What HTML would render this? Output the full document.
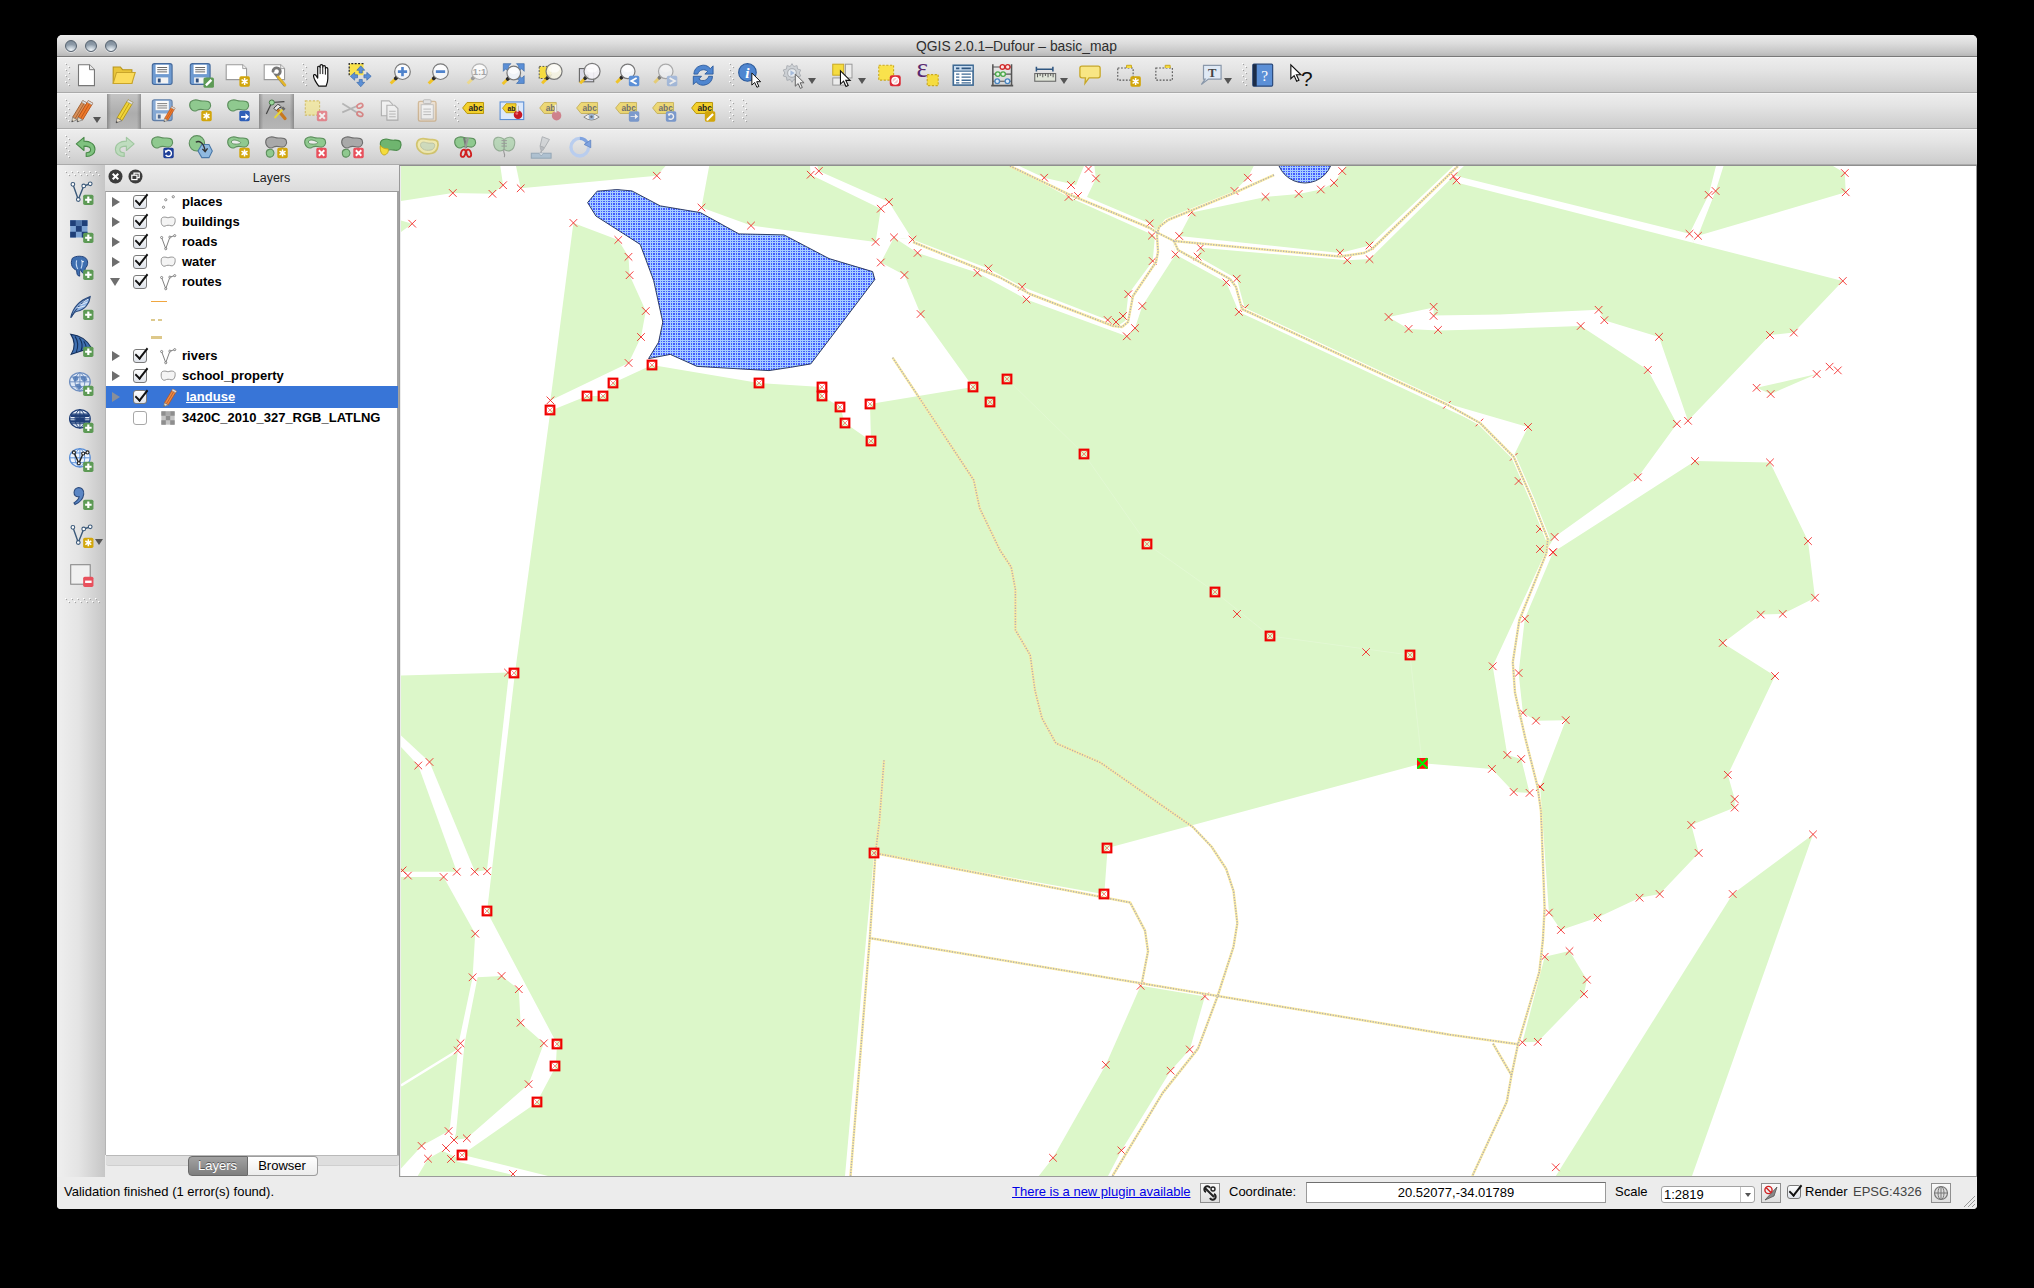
<!DOCTYPE html><html><head><meta charset="utf-8"><title>QGIS</title><style>
*{box-sizing:border-box;margin:0;padding:0}
html,body{width:2034px;height:1288px;background:#000;overflow:hidden}
body{font-family:"Liberation Sans",sans-serif;font-size:13px;color:#000;position:relative}
.abs{position:absolute}
#win{position:absolute;left:57px;top:35px;width:1920px;height:1174px;background:#ececec;border-radius:5px 5px 4px 4px;overflow:hidden}
#title{position:absolute;left:0;top:0;width:1920px;height:22px;background:linear-gradient(#ececec,#dcdcdc 40%,#c4c4c4 85%,#b6b6b6);border-bottom:1px solid #787878;border-radius:5px 5px 0 0;font-size:13.85px;line-height:22px;color:#2e2e2e}
#title span{position:absolute;left:859px;top:0;white-space:nowrap;letter-spacing:0px}
.tl{position:absolute;top:5px;width:12px;height:12px;border-radius:6px;background:radial-gradient(ellipse 70% 55% at 50% 92%,#f2f6f9 0,#c8d2da 45%,rgba(160,174,186,0) 100%),linear-gradient(#7c8a98,#aebac6);border:1px solid #55616e;box-shadow:0 1px 0 rgba(255,255,255,0.45)}
.tb{position:absolute;left:0;width:1920px;height:36px;background:linear-gradient(#ededed,#e4e4e4 35%,#d0d0d0 90%,#cbcbcb);border-top:1px solid #f4f4f4;border-bottom:1px solid #ababab}
.hv{position:absolute;width:6px;height:24px;background-image:radial-gradient(circle at 1.5px 1.5px,#a3a3a3 0.55px,rgba(163,163,163,0) 1.05px),radial-gradient(circle at 2.2px 2.2px,#ffffff 0.8px,rgba(255,255,255,0) 1.35px),radial-gradient(circle at 4.5px 4.5px,#a3a3a3 0.55px,rgba(163,163,163,0) 1.05px),radial-gradient(circle at 5.2px 5.2px,#ffffff 0.8px,rgba(255,255,255,0) 1.35px);background-size:6px 6px}
.hh{position:absolute;height:6px;width:36px;background-image:radial-gradient(circle at 1.5px 1.5px,#a3a3a3 0.55px,rgba(163,163,163,0) 1.05px),radial-gradient(circle at 2.2px 2.2px,#ffffff 0.8px,rgba(255,255,255,0) 1.35px),radial-gradient(circle at 4.5px 4.5px,#a3a3a3 0.55px,rgba(163,163,163,0) 1.05px),radial-gradient(circle at 5.2px 5.2px,#ffffff 0.8px,rgba(255,255,255,0) 1.35px);background-size:6px 6px}
.pressed{position:absolute;height:35px;background:linear-gradient(90deg,rgba(90,90,90,0.45),rgba(90,90,90,0) 12%,rgba(90,90,90,0) 88%,rgba(90,90,90,0.45)),linear-gradient(#c4c4c4,#adadad 55%,#b6b6b6)}
.ic{position:absolute;width:24px;height:24px;overflow:visible}
.dd{position:absolute;width:0;height:0;border-left:4px solid transparent;border-right:4px solid transparent;border-top:6.5px solid #555}
#ltb{position:absolute;left:0;top:130px;width:48px;height:1012px;background:linear-gradient(90deg,#efefef,#e4e4e4 45%,#c6c6c6)}
#lhead{position:absolute;left:48px;top:130px;width:294px;height:27px;background:linear-gradient(#ededed,#dcdcdc);border-bottom:1px solid #a5a5a5;text-align:center;line-height:26px;font-size:12.5px;color:#222;padding-left:39px}
#tree{position:absolute;left:48px;top:156px;width:294px;height:964px;background:#fff;border-left:1px solid #b5b5b5;border-right:2px solid #a3a3a3;border-top:1px solid #9c9c9c}
.row{position:absolute;left:0;width:290px;height:20px;font-weight:bold;font-size:13px;line-height:20px;white-space:nowrap}
.row .t{position:absolute;left:76px;top:0}
.arr{position:absolute;left:6px;top:5px;width:0;height:0;border-top:5px solid transparent;border-bottom:5px solid transparent;border-left:8px solid #6e6e6e}
.arrd{position:absolute;left:4px;top:6px;width:0;height:0;border-left:5px solid transparent;border-right:5px solid transparent;border-top:8px solid #6e6e6e}
.cb{position:absolute;left:27px;top:3px;width:14px;height:14px;border:1px solid #7a7a7a;border-radius:3px;background:linear-gradient(#fdfdfd,#dfe3ea)}
.cb.on:after{content:"";position:absolute;left:3.5px;top:-4.5px;width:5px;height:12px;border:solid #111;border-width:0 2.4px 2.4px 0;transform:rotate(38deg) skewY(8deg)}
#status{position:absolute;left:0;top:1142px;width:1920px;height:32px;background:#ececec;font-size:13px;line-height:16px}
#mapborder{position:absolute;left:342px;top:130px;width:1578px;height:1012px;border:1px solid #9a9a9a;border-top-color:#8f8f8f}
</style></head><body>
<div id="win">
<div id="title"><span>QGIS 2.0.1&#8211;Dufour &#8211; basic_map</span><div class="tl" style="left:8px"></div><div class="tl" style="left:28px"></div><div class="tl" style="left:48px"></div></div>
<div class="tb" style="top:22px"></div>
<div class="tb" style="top:58px"></div>
<div class="tb" style="top:94px"></div>
<div class="pressed" style="left:50px;top:58.5px;width:34px"></div><div class="pressed" style="left:202px;top:58.5px;width:34.5px"></div><svg class="abs" style="left:7.549999999999997px;top:28.450000000000003px;width:6px;height:25px" viewBox="0 0 6 25"><rect x="0" y="0" width="1" height="1" fill="#ffffff"/><rect x="1" y="1" width="1.1" height="1.1" fill="#a2a2a2"/><rect x="1" y="0" width="1" height="1" fill="#e9e9e9" opacity="0.6"/><rect x="0" y="1" width="1" height="1" fill="#e9e9e9" opacity="0.6"/><rect x="3" y="3" width="1" height="1" fill="#ffffff"/><rect x="4" y="4" width="1.1" height="1.1" fill="#a2a2a2"/><rect x="4" y="3" width="1" height="1" fill="#e9e9e9" opacity="0.6"/><rect x="3" y="4" width="1" height="1" fill="#e9e9e9" opacity="0.6"/><rect x="0" y="6" width="1" height="1" fill="#ffffff"/><rect x="1" y="7" width="1.1" height="1.1" fill="#a2a2a2"/><rect x="1" y="6" width="1" height="1" fill="#e9e9e9" opacity="0.6"/><rect x="0" y="7" width="1" height="1" fill="#e9e9e9" opacity="0.6"/><rect x="3" y="9" width="1" height="1" fill="#ffffff"/><rect x="4" y="10" width="1.1" height="1.1" fill="#a2a2a2"/><rect x="4" y="9" width="1" height="1" fill="#e9e9e9" opacity="0.6"/><rect x="3" y="10" width="1" height="1" fill="#e9e9e9" opacity="0.6"/><rect x="0" y="12" width="1" height="1" fill="#ffffff"/><rect x="1" y="13" width="1.1" height="1.1" fill="#a2a2a2"/><rect x="1" y="12" width="1" height="1" fill="#e9e9e9" opacity="0.6"/><rect x="0" y="13" width="1" height="1" fill="#e9e9e9" opacity="0.6"/><rect x="3" y="15" width="1" height="1" fill="#ffffff"/><rect x="4" y="16" width="1.1" height="1.1" fill="#a2a2a2"/><rect x="4" y="15" width="1" height="1" fill="#e9e9e9" opacity="0.6"/><rect x="3" y="16" width="1" height="1" fill="#e9e9e9" opacity="0.6"/><rect x="0" y="18" width="1" height="1" fill="#ffffff"/><rect x="1" y="19" width="1.1" height="1.1" fill="#a2a2a2"/><rect x="1" y="18" width="1" height="1" fill="#e9e9e9" opacity="0.6"/><rect x="0" y="19" width="1" height="1" fill="#e9e9e9" opacity="0.6"/><rect x="3" y="21" width="1" height="1" fill="#ffffff"/><rect x="4" y="22" width="1.1" height="1.1" fill="#a2a2a2"/><rect x="4" y="21" width="1" height="1" fill="#e9e9e9" opacity="0.6"/><rect x="3" y="22" width="1" height="1" fill="#e9e9e9" opacity="0.6"/></svg><svg class="abs" style="left:244.55px;top:28.450000000000003px;width:6px;height:25px" viewBox="0 0 6 25"><rect x="0" y="0" width="1" height="1" fill="#ffffff"/><rect x="1" y="1" width="1.1" height="1.1" fill="#a2a2a2"/><rect x="1" y="0" width="1" height="1" fill="#e9e9e9" opacity="0.6"/><rect x="0" y="1" width="1" height="1" fill="#e9e9e9" opacity="0.6"/><rect x="3" y="3" width="1" height="1" fill="#ffffff"/><rect x="4" y="4" width="1.1" height="1.1" fill="#a2a2a2"/><rect x="4" y="3" width="1" height="1" fill="#e9e9e9" opacity="0.6"/><rect x="3" y="4" width="1" height="1" fill="#e9e9e9" opacity="0.6"/><rect x="0" y="6" width="1" height="1" fill="#ffffff"/><rect x="1" y="7" width="1.1" height="1.1" fill="#a2a2a2"/><rect x="1" y="6" width="1" height="1" fill="#e9e9e9" opacity="0.6"/><rect x="0" y="7" width="1" height="1" fill="#e9e9e9" opacity="0.6"/><rect x="3" y="9" width="1" height="1" fill="#ffffff"/><rect x="4" y="10" width="1.1" height="1.1" fill="#a2a2a2"/><rect x="4" y="9" width="1" height="1" fill="#e9e9e9" opacity="0.6"/><rect x="3" y="10" width="1" height="1" fill="#e9e9e9" opacity="0.6"/><rect x="0" y="12" width="1" height="1" fill="#ffffff"/><rect x="1" y="13" width="1.1" height="1.1" fill="#a2a2a2"/><rect x="1" y="12" width="1" height="1" fill="#e9e9e9" opacity="0.6"/><rect x="0" y="13" width="1" height="1" fill="#e9e9e9" opacity="0.6"/><rect x="3" y="15" width="1" height="1" fill="#ffffff"/><rect x="4" y="16" width="1.1" height="1.1" fill="#a2a2a2"/><rect x="4" y="15" width="1" height="1" fill="#e9e9e9" opacity="0.6"/><rect x="3" y="16" width="1" height="1" fill="#e9e9e9" opacity="0.6"/><rect x="0" y="18" width="1" height="1" fill="#ffffff"/><rect x="1" y="19" width="1.1" height="1.1" fill="#a2a2a2"/><rect x="1" y="18" width="1" height="1" fill="#e9e9e9" opacity="0.6"/><rect x="0" y="19" width="1" height="1" fill="#e9e9e9" opacity="0.6"/><rect x="3" y="21" width="1" height="1" fill="#ffffff"/><rect x="4" y="22" width="1.1" height="1.1" fill="#a2a2a2"/><rect x="4" y="21" width="1" height="1" fill="#e9e9e9" opacity="0.6"/><rect x="3" y="22" width="1" height="1" fill="#e9e9e9" opacity="0.6"/></svg><svg class="abs" style="left:671.55px;top:28.450000000000003px;width:6px;height:25px" viewBox="0 0 6 25"><rect x="0" y="0" width="1" height="1" fill="#ffffff"/><rect x="1" y="1" width="1.1" height="1.1" fill="#a2a2a2"/><rect x="1" y="0" width="1" height="1" fill="#e9e9e9" opacity="0.6"/><rect x="0" y="1" width="1" height="1" fill="#e9e9e9" opacity="0.6"/><rect x="3" y="3" width="1" height="1" fill="#ffffff"/><rect x="4" y="4" width="1.1" height="1.1" fill="#a2a2a2"/><rect x="4" y="3" width="1" height="1" fill="#e9e9e9" opacity="0.6"/><rect x="3" y="4" width="1" height="1" fill="#e9e9e9" opacity="0.6"/><rect x="0" y="6" width="1" height="1" fill="#ffffff"/><rect x="1" y="7" width="1.1" height="1.1" fill="#a2a2a2"/><rect x="1" y="6" width="1" height="1" fill="#e9e9e9" opacity="0.6"/><rect x="0" y="7" width="1" height="1" fill="#e9e9e9" opacity="0.6"/><rect x="3" y="9" width="1" height="1" fill="#ffffff"/><rect x="4" y="10" width="1.1" height="1.1" fill="#a2a2a2"/><rect x="4" y="9" width="1" height="1" fill="#e9e9e9" opacity="0.6"/><rect x="3" y="10" width="1" height="1" fill="#e9e9e9" opacity="0.6"/><rect x="0" y="12" width="1" height="1" fill="#ffffff"/><rect x="1" y="13" width="1.1" height="1.1" fill="#a2a2a2"/><rect x="1" y="12" width="1" height="1" fill="#e9e9e9" opacity="0.6"/><rect x="0" y="13" width="1" height="1" fill="#e9e9e9" opacity="0.6"/><rect x="3" y="15" width="1" height="1" fill="#ffffff"/><rect x="4" y="16" width="1.1" height="1.1" fill="#a2a2a2"/><rect x="4" y="15" width="1" height="1" fill="#e9e9e9" opacity="0.6"/><rect x="3" y="16" width="1" height="1" fill="#e9e9e9" opacity="0.6"/><rect x="0" y="18" width="1" height="1" fill="#ffffff"/><rect x="1" y="19" width="1.1" height="1.1" fill="#a2a2a2"/><rect x="1" y="18" width="1" height="1" fill="#e9e9e9" opacity="0.6"/><rect x="0" y="19" width="1" height="1" fill="#e9e9e9" opacity="0.6"/><rect x="3" y="21" width="1" height="1" fill="#ffffff"/><rect x="4" y="22" width="1.1" height="1.1" fill="#a2a2a2"/><rect x="4" y="21" width="1" height="1" fill="#e9e9e9" opacity="0.6"/><rect x="3" y="22" width="1" height="1" fill="#e9e9e9" opacity="0.6"/></svg><svg class="abs" style="left:1184.55px;top:28.450000000000003px;width:6px;height:25px" viewBox="0 0 6 25"><rect x="0" y="0" width="1" height="1" fill="#ffffff"/><rect x="1" y="1" width="1.1" height="1.1" fill="#a2a2a2"/><rect x="1" y="0" width="1" height="1" fill="#e9e9e9" opacity="0.6"/><rect x="0" y="1" width="1" height="1" fill="#e9e9e9" opacity="0.6"/><rect x="3" y="3" width="1" height="1" fill="#ffffff"/><rect x="4" y="4" width="1.1" height="1.1" fill="#a2a2a2"/><rect x="4" y="3" width="1" height="1" fill="#e9e9e9" opacity="0.6"/><rect x="3" y="4" width="1" height="1" fill="#e9e9e9" opacity="0.6"/><rect x="0" y="6" width="1" height="1" fill="#ffffff"/><rect x="1" y="7" width="1.1" height="1.1" fill="#a2a2a2"/><rect x="1" y="6" width="1" height="1" fill="#e9e9e9" opacity="0.6"/><rect x="0" y="7" width="1" height="1" fill="#e9e9e9" opacity="0.6"/><rect x="3" y="9" width="1" height="1" fill="#ffffff"/><rect x="4" y="10" width="1.1" height="1.1" fill="#a2a2a2"/><rect x="4" y="9" width="1" height="1" fill="#e9e9e9" opacity="0.6"/><rect x="3" y="10" width="1" height="1" fill="#e9e9e9" opacity="0.6"/><rect x="0" y="12" width="1" height="1" fill="#ffffff"/><rect x="1" y="13" width="1.1" height="1.1" fill="#a2a2a2"/><rect x="1" y="12" width="1" height="1" fill="#e9e9e9" opacity="0.6"/><rect x="0" y="13" width="1" height="1" fill="#e9e9e9" opacity="0.6"/><rect x="3" y="15" width="1" height="1" fill="#ffffff"/><rect x="4" y="16" width="1.1" height="1.1" fill="#a2a2a2"/><rect x="4" y="15" width="1" height="1" fill="#e9e9e9" opacity="0.6"/><rect x="3" y="16" width="1" height="1" fill="#e9e9e9" opacity="0.6"/><rect x="0" y="18" width="1" height="1" fill="#ffffff"/><rect x="1" y="19" width="1.1" height="1.1" fill="#a2a2a2"/><rect x="1" y="18" width="1" height="1" fill="#e9e9e9" opacity="0.6"/><rect x="0" y="19" width="1" height="1" fill="#e9e9e9" opacity="0.6"/><rect x="3" y="21" width="1" height="1" fill="#ffffff"/><rect x="4" y="22" width="1.1" height="1.1" fill="#a2a2a2"/><rect x="4" y="21" width="1" height="1" fill="#e9e9e9" opacity="0.6"/><rect x="3" y="22" width="1" height="1" fill="#e9e9e9" opacity="0.6"/></svg><svg class="abs" style="left:7.549999999999997px;top:64.45px;width:6px;height:25px" viewBox="0 0 6 25"><rect x="0" y="0" width="1" height="1" fill="#ffffff"/><rect x="1" y="1" width="1.1" height="1.1" fill="#a2a2a2"/><rect x="1" y="0" width="1" height="1" fill="#e9e9e9" opacity="0.6"/><rect x="0" y="1" width="1" height="1" fill="#e9e9e9" opacity="0.6"/><rect x="3" y="3" width="1" height="1" fill="#ffffff"/><rect x="4" y="4" width="1.1" height="1.1" fill="#a2a2a2"/><rect x="4" y="3" width="1" height="1" fill="#e9e9e9" opacity="0.6"/><rect x="3" y="4" width="1" height="1" fill="#e9e9e9" opacity="0.6"/><rect x="0" y="6" width="1" height="1" fill="#ffffff"/><rect x="1" y="7" width="1.1" height="1.1" fill="#a2a2a2"/><rect x="1" y="6" width="1" height="1" fill="#e9e9e9" opacity="0.6"/><rect x="0" y="7" width="1" height="1" fill="#e9e9e9" opacity="0.6"/><rect x="3" y="9" width="1" height="1" fill="#ffffff"/><rect x="4" y="10" width="1.1" height="1.1" fill="#a2a2a2"/><rect x="4" y="9" width="1" height="1" fill="#e9e9e9" opacity="0.6"/><rect x="3" y="10" width="1" height="1" fill="#e9e9e9" opacity="0.6"/><rect x="0" y="12" width="1" height="1" fill="#ffffff"/><rect x="1" y="13" width="1.1" height="1.1" fill="#a2a2a2"/><rect x="1" y="12" width="1" height="1" fill="#e9e9e9" opacity="0.6"/><rect x="0" y="13" width="1" height="1" fill="#e9e9e9" opacity="0.6"/><rect x="3" y="15" width="1" height="1" fill="#ffffff"/><rect x="4" y="16" width="1.1" height="1.1" fill="#a2a2a2"/><rect x="4" y="15" width="1" height="1" fill="#e9e9e9" opacity="0.6"/><rect x="3" y="16" width="1" height="1" fill="#e9e9e9" opacity="0.6"/><rect x="0" y="18" width="1" height="1" fill="#ffffff"/><rect x="1" y="19" width="1.1" height="1.1" fill="#a2a2a2"/><rect x="1" y="18" width="1" height="1" fill="#e9e9e9" opacity="0.6"/><rect x="0" y="19" width="1" height="1" fill="#e9e9e9" opacity="0.6"/><rect x="3" y="21" width="1" height="1" fill="#ffffff"/><rect x="4" y="22" width="1.1" height="1.1" fill="#a2a2a2"/><rect x="4" y="21" width="1" height="1" fill="#e9e9e9" opacity="0.6"/><rect x="3" y="22" width="1" height="1" fill="#e9e9e9" opacity="0.6"/></svg><svg class="abs" style="left:396.55px;top:64.45px;width:6px;height:25px" viewBox="0 0 6 25"><rect x="0" y="0" width="1" height="1" fill="#ffffff"/><rect x="1" y="1" width="1.1" height="1.1" fill="#a2a2a2"/><rect x="1" y="0" width="1" height="1" fill="#e9e9e9" opacity="0.6"/><rect x="0" y="1" width="1" height="1" fill="#e9e9e9" opacity="0.6"/><rect x="3" y="3" width="1" height="1" fill="#ffffff"/><rect x="4" y="4" width="1.1" height="1.1" fill="#a2a2a2"/><rect x="4" y="3" width="1" height="1" fill="#e9e9e9" opacity="0.6"/><rect x="3" y="4" width="1" height="1" fill="#e9e9e9" opacity="0.6"/><rect x="0" y="6" width="1" height="1" fill="#ffffff"/><rect x="1" y="7" width="1.1" height="1.1" fill="#a2a2a2"/><rect x="1" y="6" width="1" height="1" fill="#e9e9e9" opacity="0.6"/><rect x="0" y="7" width="1" height="1" fill="#e9e9e9" opacity="0.6"/><rect x="3" y="9" width="1" height="1" fill="#ffffff"/><rect x="4" y="10" width="1.1" height="1.1" fill="#a2a2a2"/><rect x="4" y="9" width="1" height="1" fill="#e9e9e9" opacity="0.6"/><rect x="3" y="10" width="1" height="1" fill="#e9e9e9" opacity="0.6"/><rect x="0" y="12" width="1" height="1" fill="#ffffff"/><rect x="1" y="13" width="1.1" height="1.1" fill="#a2a2a2"/><rect x="1" y="12" width="1" height="1" fill="#e9e9e9" opacity="0.6"/><rect x="0" y="13" width="1" height="1" fill="#e9e9e9" opacity="0.6"/><rect x="3" y="15" width="1" height="1" fill="#ffffff"/><rect x="4" y="16" width="1.1" height="1.1" fill="#a2a2a2"/><rect x="4" y="15" width="1" height="1" fill="#e9e9e9" opacity="0.6"/><rect x="3" y="16" width="1" height="1" fill="#e9e9e9" opacity="0.6"/><rect x="0" y="18" width="1" height="1" fill="#ffffff"/><rect x="1" y="19" width="1.1" height="1.1" fill="#a2a2a2"/><rect x="1" y="18" width="1" height="1" fill="#e9e9e9" opacity="0.6"/><rect x="0" y="19" width="1" height="1" fill="#e9e9e9" opacity="0.6"/><rect x="3" y="21" width="1" height="1" fill="#ffffff"/><rect x="4" y="22" width="1.1" height="1.1" fill="#a2a2a2"/><rect x="4" y="21" width="1" height="1" fill="#e9e9e9" opacity="0.6"/><rect x="3" y="22" width="1" height="1" fill="#e9e9e9" opacity="0.6"/></svg><svg class="abs" style="left:671.55px;top:64.45px;width:6px;height:25px" viewBox="0 0 6 25"><rect x="0" y="0" width="1" height="1" fill="#ffffff"/><rect x="1" y="1" width="1.1" height="1.1" fill="#a2a2a2"/><rect x="1" y="0" width="1" height="1" fill="#e9e9e9" opacity="0.6"/><rect x="0" y="1" width="1" height="1" fill="#e9e9e9" opacity="0.6"/><rect x="3" y="3" width="1" height="1" fill="#ffffff"/><rect x="4" y="4" width="1.1" height="1.1" fill="#a2a2a2"/><rect x="4" y="3" width="1" height="1" fill="#e9e9e9" opacity="0.6"/><rect x="3" y="4" width="1" height="1" fill="#e9e9e9" opacity="0.6"/><rect x="0" y="6" width="1" height="1" fill="#ffffff"/><rect x="1" y="7" width="1.1" height="1.1" fill="#a2a2a2"/><rect x="1" y="6" width="1" height="1" fill="#e9e9e9" opacity="0.6"/><rect x="0" y="7" width="1" height="1" fill="#e9e9e9" opacity="0.6"/><rect x="3" y="9" width="1" height="1" fill="#ffffff"/><rect x="4" y="10" width="1.1" height="1.1" fill="#a2a2a2"/><rect x="4" y="9" width="1" height="1" fill="#e9e9e9" opacity="0.6"/><rect x="3" y="10" width="1" height="1" fill="#e9e9e9" opacity="0.6"/><rect x="0" y="12" width="1" height="1" fill="#ffffff"/><rect x="1" y="13" width="1.1" height="1.1" fill="#a2a2a2"/><rect x="1" y="12" width="1" height="1" fill="#e9e9e9" opacity="0.6"/><rect x="0" y="13" width="1" height="1" fill="#e9e9e9" opacity="0.6"/><rect x="3" y="15" width="1" height="1" fill="#ffffff"/><rect x="4" y="16" width="1.1" height="1.1" fill="#a2a2a2"/><rect x="4" y="15" width="1" height="1" fill="#e9e9e9" opacity="0.6"/><rect x="3" y="16" width="1" height="1" fill="#e9e9e9" opacity="0.6"/><rect x="0" y="18" width="1" height="1" fill="#ffffff"/><rect x="1" y="19" width="1.1" height="1.1" fill="#a2a2a2"/><rect x="1" y="18" width="1" height="1" fill="#e9e9e9" opacity="0.6"/><rect x="0" y="19" width="1" height="1" fill="#e9e9e9" opacity="0.6"/><rect x="3" y="21" width="1" height="1" fill="#ffffff"/><rect x="4" y="22" width="1.1" height="1.1" fill="#a2a2a2"/><rect x="4" y="21" width="1" height="1" fill="#e9e9e9" opacity="0.6"/><rect x="3" y="22" width="1" height="1" fill="#e9e9e9" opacity="0.6"/></svg><svg class="abs" style="left:684.55px;top:64.45px;width:6px;height:25px" viewBox="0 0 6 25"><rect x="0" y="0" width="1" height="1" fill="#ffffff"/><rect x="1" y="1" width="1.1" height="1.1" fill="#a2a2a2"/><rect x="1" y="0" width="1" height="1" fill="#e9e9e9" opacity="0.6"/><rect x="0" y="1" width="1" height="1" fill="#e9e9e9" opacity="0.6"/><rect x="3" y="3" width="1" height="1" fill="#ffffff"/><rect x="4" y="4" width="1.1" height="1.1" fill="#a2a2a2"/><rect x="4" y="3" width="1" height="1" fill="#e9e9e9" opacity="0.6"/><rect x="3" y="4" width="1" height="1" fill="#e9e9e9" opacity="0.6"/><rect x="0" y="6" width="1" height="1" fill="#ffffff"/><rect x="1" y="7" width="1.1" height="1.1" fill="#a2a2a2"/><rect x="1" y="6" width="1" height="1" fill="#e9e9e9" opacity="0.6"/><rect x="0" y="7" width="1" height="1" fill="#e9e9e9" opacity="0.6"/><rect x="3" y="9" width="1" height="1" fill="#ffffff"/><rect x="4" y="10" width="1.1" height="1.1" fill="#a2a2a2"/><rect x="4" y="9" width="1" height="1" fill="#e9e9e9" opacity="0.6"/><rect x="3" y="10" width="1" height="1" fill="#e9e9e9" opacity="0.6"/><rect x="0" y="12" width="1" height="1" fill="#ffffff"/><rect x="1" y="13" width="1.1" height="1.1" fill="#a2a2a2"/><rect x="1" y="12" width="1" height="1" fill="#e9e9e9" opacity="0.6"/><rect x="0" y="13" width="1" height="1" fill="#e9e9e9" opacity="0.6"/><rect x="3" y="15" width="1" height="1" fill="#ffffff"/><rect x="4" y="16" width="1.1" height="1.1" fill="#a2a2a2"/><rect x="4" y="15" width="1" height="1" fill="#e9e9e9" opacity="0.6"/><rect x="3" y="16" width="1" height="1" fill="#e9e9e9" opacity="0.6"/><rect x="0" y="18" width="1" height="1" fill="#ffffff"/><rect x="1" y="19" width="1.1" height="1.1" fill="#a2a2a2"/><rect x="1" y="18" width="1" height="1" fill="#e9e9e9" opacity="0.6"/><rect x="0" y="19" width="1" height="1" fill="#e9e9e9" opacity="0.6"/><rect x="3" y="21" width="1" height="1" fill="#ffffff"/><rect x="4" y="22" width="1.1" height="1.1" fill="#a2a2a2"/><rect x="4" y="21" width="1" height="1" fill="#e9e9e9" opacity="0.6"/><rect x="3" y="22" width="1" height="1" fill="#e9e9e9" opacity="0.6"/></svg><svg class="abs" style="left:7.549999999999997px;top:100.44999999999999px;width:6px;height:25px" viewBox="0 0 6 25"><rect x="0" y="0" width="1" height="1" fill="#ffffff"/><rect x="1" y="1" width="1.1" height="1.1" fill="#a2a2a2"/><rect x="1" y="0" width="1" height="1" fill="#e9e9e9" opacity="0.6"/><rect x="0" y="1" width="1" height="1" fill="#e9e9e9" opacity="0.6"/><rect x="3" y="3" width="1" height="1" fill="#ffffff"/><rect x="4" y="4" width="1.1" height="1.1" fill="#a2a2a2"/><rect x="4" y="3" width="1" height="1" fill="#e9e9e9" opacity="0.6"/><rect x="3" y="4" width="1" height="1" fill="#e9e9e9" opacity="0.6"/><rect x="0" y="6" width="1" height="1" fill="#ffffff"/><rect x="1" y="7" width="1.1" height="1.1" fill="#a2a2a2"/><rect x="1" y="6" width="1" height="1" fill="#e9e9e9" opacity="0.6"/><rect x="0" y="7" width="1" height="1" fill="#e9e9e9" opacity="0.6"/><rect x="3" y="9" width="1" height="1" fill="#ffffff"/><rect x="4" y="10" width="1.1" height="1.1" fill="#a2a2a2"/><rect x="4" y="9" width="1" height="1" fill="#e9e9e9" opacity="0.6"/><rect x="3" y="10" width="1" height="1" fill="#e9e9e9" opacity="0.6"/><rect x="0" y="12" width="1" height="1" fill="#ffffff"/><rect x="1" y="13" width="1.1" height="1.1" fill="#a2a2a2"/><rect x="1" y="12" width="1" height="1" fill="#e9e9e9" opacity="0.6"/><rect x="0" y="13" width="1" height="1" fill="#e9e9e9" opacity="0.6"/><rect x="3" y="15" width="1" height="1" fill="#ffffff"/><rect x="4" y="16" width="1.1" height="1.1" fill="#a2a2a2"/><rect x="4" y="15" width="1" height="1" fill="#e9e9e9" opacity="0.6"/><rect x="3" y="16" width="1" height="1" fill="#e9e9e9" opacity="0.6"/><rect x="0" y="18" width="1" height="1" fill="#ffffff"/><rect x="1" y="19" width="1.1" height="1.1" fill="#a2a2a2"/><rect x="1" y="18" width="1" height="1" fill="#e9e9e9" opacity="0.6"/><rect x="0" y="19" width="1" height="1" fill="#e9e9e9" opacity="0.6"/><rect x="3" y="21" width="1" height="1" fill="#ffffff"/><rect x="4" y="22" width="1.1" height="1.1" fill="#a2a2a2"/><rect x="4" y="21" width="1" height="1" fill="#e9e9e9" opacity="0.6"/><rect x="3" y="22" width="1" height="1" fill="#e9e9e9" opacity="0.6"/></svg><svg class="ic" style="left:15.8px;top:26.8px;width:26.4px;height:26.4px" viewBox="0 0 24 24"><path d="M5,2.5H15L19.5,7V21.5H5Z" fill="#fff" stroke="#777" stroke-width="1"/><path d="M15,2.5V7H19.5" fill="#e8e8e8" stroke="#777" stroke-width="0.9"/></svg><svg class="ic" style="left:53.8px;top:26.8px;width:26.4px;height:26.4px" viewBox="0 0 24 24"><g transform="translate(-0.5,-1)"><path d="M2.5,5.5H9L11,8H19.5V20H2.5Z" fill="#e9c53a" stroke="#b9951a" stroke-width="1"/><path d="M5.5,10.5H22.5L19.5,20.5H2.5Z" fill="#fbdc5c" stroke="#c9a52a" stroke-width="1"/></g></svg><svg class="ic" style="left:91.8px;top:26.8px;width:26.4px;height:26.4px" viewBox="0 0 24 24"><g transform="translate(0,-1)"><rect x="3" y="2.5" width="18" height="19" rx="2" fill="#6f9bd1" stroke="#44699c" stroke-width="1"/><rect x="6" y="3.5" width="12" height="8.5" fill="#fff"/><path d="M7.5,6h9M7.5,8h9M7.5,10h9" stroke="#666" stroke-width="0.9"/><rect x="6.5" y="15" width="11" height="5.5" fill="#f3f3f3"/><rect x="8" y="16" width="2.6" height="3.6" fill="#2f4f7f"/></g></svg><svg class="ic" style="left:129.8px;top:26.8px;width:26.4px;height:26.4px" viewBox="0 0 24 24"><g transform="translate(0,-1)"><rect x="3" y="2.5" width="18" height="19" rx="2" fill="#6f9bd1" stroke="#44699c" stroke-width="1"/><rect x="6" y="3.5" width="12" height="8.5" fill="#fff"/><path d="M7.5,6h9M7.5,8h9M7.5,10h9" stroke="#666" stroke-width="0.9"/><rect x="6.5" y="15" width="11" height="5.5" fill="#f3f3f3"/><rect x="8" y="16" width="2.6" height="3.6" fill="#2f4f7f"/></g><rect x="15" y="14" width="9.5" height="9.5" rx="1.5" fill="#5d9a55"/><path d="M17.2,21.3l5,-5" stroke="#fff" stroke-width="2.2"/></svg><svg class="ic" style="left:167.3px;top:26.8px;width:26.4px;height:26.4px" viewBox="0 0 24 24"><path d="M2,2.5H17L20.5,6V16H2Z" fill="#fff" stroke="#9a9a9a" stroke-width="1"/><path d="M17,2.5V6H20.5" fill="#eee" stroke="#9a9a9a" stroke-width="0.8"/><rect x="14" y="13" width="9.5" height="9.5" rx="1.5" fill="#d2a60c"/><g transform="translate(0,0)"><path d="M18.75,14.5v6.5M16,16.1l5.5,3.3M21.5,16.1l-5.5,3.3" stroke="#fff" stroke-width="1.4"/></g></svg><svg class="ic" style="left:204.8px;top:26.8px;width:26.4px;height:26.4px" viewBox="0 0 24 24"><path d="M2,2.5H17L20.5,6V16H2Z" fill="#fff" stroke="#9a9a9a" stroke-width="1"/><path d="M17,2.5V6H20.5" fill="#eee" stroke="#9a9a9a" stroke-width="0.8"/><path d="M10,8.5a3.3,3.3 0 1 1 3,3.4L20.5,21" stroke="#777" stroke-width="2.6" fill="none" stroke-linecap="round"/><path d="M14.5,13.5L21,21" stroke="#e2b52a" stroke-width="2.2" stroke-linecap="round"/></svg><svg class="ic" style="left:253.3px;top:26.8px;width:26.4px;height:26.4px" viewBox="0 0 24 24"><path d="M8,22C5,18 3.5,15 3.2,12.8C3,11.4 4.6,11 5.4,12.2L7,14.6V5C7,3.5 9.2,3.5 9.2,5V3.5C9.2,2 11.6,2 11.6,3.5V4.5C11.6,3 14,3 14,4.6V6C14,4.8 16.2,4.8 16.2,6.4V15C16.2,18 15.5,20 14.6,22Z" fill="#fff" stroke="#111" stroke-width="1.1" stroke-linejoin="round"/><path d="M9.2,5v6M11.6,4.5v6.5M14,6v5.5" stroke="#111" stroke-width="0.9"/></svg><svg class="ic" style="left:289.8px;top:26.8px;width:26.4px;height:26.4px" viewBox="0 0 24 24"><rect x="2" y="1.5" width="13" height="10.5" fill="#f9e24c"/><path d="M2,12V1.5H15" fill="none" stroke="#222" stroke-width="1.1" stroke-dasharray="1.8 1.3"/><path d="M12.5,3.5l3.6,4h-2.2v2.6h-2.8V7.5H8.9ZM12.5,22.5l-3.6,-4h2.2v-2.6h2.8v2.6h2.2ZM3,13l4,-3.6v2.2h2.6v2.8H7v2.2ZM22,13l-4,3.6v-2.2h-2.6v-2.8H18V9.4Z" fill="#5b8fd6" stroke="#3a6aa8" stroke-width="0.6"/></svg><svg class="ic" style="left:328.8px;top:26.8px;width:26.4px;height:26.4px" viewBox="0 0 24 24"><path d="M10.088000000000001,13.712L4.288000000000002,19.512" stroke="#f0c428" stroke-width="2.7" stroke-linecap="butt"/><path d="M5.488000000000001,16.512L6.6880000000000015,19.112" stroke="#2a2a2a" stroke-width="0" /><path d="M10.788000000000002,13.011999999999999L8.788000000000002,15.011999999999999" stroke="#2a2a2a" stroke-width="3.2" stroke-linecap="round"/><circle cx="15" cy="8.8" r="7.1" fill="#f3f5f8" stroke="#7a7a7a" stroke-width="1.1"/><ellipse cx="15" cy="6.315000000000001" rx="5.111999999999999" ry="3.55" fill="#fff" opacity="0.7"/><path d="M15,4.6v8.4M10.8,8.8h8.4" stroke="#4f83cc" stroke-width="2.4"/></svg><svg class="ic" style="left:366.8px;top:26.8px;width:26.4px;height:26.4px" viewBox="0 0 24 24"><path d="M10.088000000000001,13.712L4.288000000000002,19.512" stroke="#f0c428" stroke-width="2.7" stroke-linecap="butt"/><path d="M5.488000000000001,16.512L6.6880000000000015,19.112" stroke="#2a2a2a" stroke-width="0" /><path d="M10.788000000000002,13.011999999999999L8.788000000000002,15.011999999999999" stroke="#2a2a2a" stroke-width="3.2" stroke-linecap="round"/><circle cx="15" cy="8.8" r="7.1" fill="#f3f5f8" stroke="#7a7a7a" stroke-width="1.1"/><ellipse cx="15" cy="6.315000000000001" rx="5.111999999999999" ry="3.55" fill="#fff" opacity="0.7"/><path d="M10.8,8.8h8.4" stroke="#4f83cc" stroke-width="2.4"/></svg><svg class="ic" style="left:405.8px;top:26.8px;width:26.4px;height:26.4px" viewBox="0 0 24 24"><path d="M10.088000000000001,13.712L4.288000000000002,19.512" stroke="#ecd98c" stroke-width="2.7" stroke-linecap="butt"/><path d="M5.488000000000001,16.512L6.6880000000000015,19.112" stroke="#9a9a9a" stroke-width="0" /><path d="M10.788000000000002,13.011999999999999L8.788000000000002,15.011999999999999" stroke="#9a9a9a" stroke-width="3.2" stroke-linecap="round"/><circle cx="15" cy="8.8" r="7.1" fill="#f2f2f2" stroke="#b4b4b4" stroke-width="1.1"/><ellipse cx="15" cy="6.315000000000001" rx="5.111999999999999" ry="3.55" fill="#fff" opacity="0.7"/><text x="15" y="12" font-family="Liberation Sans" font-weight="bold" font-size="8.6" text-anchor="middle" fill="#a4a4a4">1:1</text></svg><svg class="ic" style="left:442.8px;top:26.8px;width:26.4px;height:26.4px" viewBox="0 0 24 24"><path d="M3,1.5h7l-2.4,2.4l3.4,3.4l-2.4,2.4L5.2,6.3L3,8.5ZM22,1.5v7l-2.4,-2.4l-3.4,3.4l-2.4,-2.4L17.2,3.9l-2.2,-2.4ZM22,19.5h-7l2.4,-2.4l-3.4,-3.4l2.4,-2.4L19.8,14.7l2.2,-2.2Z" fill="#5b8fd6" stroke="#3a6aa8" stroke-width="0.6"/><path d="M8.236,14.264L2.4360000000000017,20.064" stroke="#f0c428" stroke-width="2.7" stroke-linecap="butt"/><path d="M3.636000000000001,17.064L4.836000000000001,19.663999999999998" stroke="#2a2a2a" stroke-width="0" /><path d="M8.936000000000002,13.563999999999998L6.936000000000002,15.563999999999998" stroke="#2a2a2a" stroke-width="3.2" stroke-linecap="round"/><circle cx="12.5" cy="10" r="6.2" fill="#eef2f7" stroke="#7a7a7a" stroke-width="1.1"/><ellipse cx="12.5" cy="7.83" rx="4.4639999999999995" ry="3.1" fill="#fff" opacity="0.7"/></svg><svg class="ic" style="left:480.3px;top:26.8px;width:26.4px;height:26.4px" viewBox="0 0 24 24"><rect x="2" y="4" width="11" height="11" fill="#f5dc40" stroke="#555" stroke-width="0.9" stroke-dasharray="1.6 1.4"/><path d="M10.443999999999999,13.556000000000001L4.644,19.356" stroke="#f0c428" stroke-width="2.7" stroke-linecap="butt"/><path d="M5.843999999999999,16.356L7.044,18.956" stroke="#2a2a2a" stroke-width="0" /><path d="M11.144,12.856L9.144,14.856" stroke="#2a2a2a" stroke-width="3.2" stroke-linecap="round"/><circle cx="15.5" cy="8.5" r="7.3" fill="rgba(246,244,226,0.88)" stroke="#7a7a7a" stroke-width="1.1"/><ellipse cx="15.5" cy="5.945" rx="5.255999999999999" ry="3.65" fill="#fff" opacity="0.7"/></svg><svg class="ic" style="left:518.3px;top:26.8px;width:26.4px;height:26.4px" viewBox="0 0 24 24"><rect x="4" y="6" width="13" height="12" fill="#d9d9e6" stroke="#666" stroke-width="1"/><path d="M10.443999999999999,13.556000000000001L4.644,19.356" stroke="#f0c428" stroke-width="2.7" stroke-linecap="butt"/><path d="M5.843999999999999,16.356L7.044,18.956" stroke="#2a2a2a" stroke-width="0" /><path d="M11.144,12.856L9.144,14.856" stroke="#2a2a2a" stroke-width="3.2" stroke-linecap="round"/><circle cx="15.5" cy="8.5" r="7.3" fill="rgba(244,242,246,0.9)" stroke="#7a7a7a" stroke-width="1.1"/><ellipse cx="15.5" cy="5.945" rx="5.255999999999999" ry="3.65" fill="#fff" opacity="0.7"/></svg><svg class="ic" style="left:556.8px;top:26.8px;width:26.4px;height:26.4px" viewBox="0 0 24 24"><path d="M7.948,13.052L2.1480000000000006,18.851999999999997" stroke="#f0c428" stroke-width="2.7" stroke-linecap="butt"/><path d="M3.348,15.851999999999999L4.548,18.451999999999998" stroke="#2a2a2a" stroke-width="0" /><path d="M8.648,12.351999999999999L6.648,14.351999999999999" stroke="#2a2a2a" stroke-width="3.2" stroke-linecap="round"/><circle cx="12.5" cy="8.5" r="6.6" fill="#f3f5f8" stroke="#7a7a7a" stroke-width="1.1"/><ellipse cx="12.5" cy="6.19" rx="4.752" ry="3.3" fill="#fff" opacity="0.7"/><rect x="13.5" y="12.5" width="9.5" height="9.5" rx="1.5" fill="#5b8fd6"/><path d="M20.6,14.6l-4.8,2.7l4.8,2.7" fill="none" stroke="#fff" stroke-width="1.7"/></svg><svg class="ic" style="left:595.3px;top:26.8px;width:26.4px;height:26.4px" viewBox="0 0 24 24"><g opacity="0.55"><path d="M7.948,13.052L2.1480000000000006,18.851999999999997" stroke="#f0c428" stroke-width="2.7" stroke-linecap="butt"/><path d="M3.348,15.851999999999999L4.548,18.451999999999998" stroke="#2a2a2a" stroke-width="0" /><path d="M8.648,12.351999999999999L6.648,14.351999999999999" stroke="#2a2a2a" stroke-width="3.2" stroke-linecap="round"/><circle cx="12.5" cy="8.5" r="6.6" fill="#f3f5f8" stroke="#7a7a7a" stroke-width="1.1"/><ellipse cx="12.5" cy="6.19" rx="4.752" ry="3.3" fill="#fff" opacity="0.7"/><rect x="13.5" y="12.5" width="9.5" height="9.5" rx="1.5" fill="#7a9fd8"/><path d="M16,14.6l4.8,2.7l-4.8,2.7" fill="none" stroke="#fff" stroke-width="1.7"/></g></svg><svg class="ic" style="left:632.8px;top:26.8px;width:26.4px;height:26.4px" viewBox="0 0 24 24"><path d="M3.5,11A8.5,8.5 0 0 1 18.5,6L21,3.5V11H13.5L16,8.5A5.5,5.5 0 0 0 7,11Z" fill="#4f86d0" stroke="#2b5a9c" stroke-width="0.8"/><path d="M20.5,13A8.5,8.5 0 0 1 5.5,18L3,20.5V13H10.5L8,15.5A5.5,5.5 0 0 0 17,13Z" fill="#4f86d0" stroke="#2b5a9c" stroke-width="0.8"/></svg><svg class="ic" style="left:679.8px;top:26.8px;width:26.4px;height:26.4px" viewBox="0 0 24 24"><circle cx="9.5" cy="9.5" r="8" fill="#4f86d0" stroke="#2b5a9c"/><text x="9.5" y="14.3" font-family="Liberation Serif" font-style="italic" font-weight="bold" font-size="14" text-anchor="middle" fill="#fff">i</text><g transform="translate(13.5,10)"><path d="M0,0L0,11L2.6,8.6L4.6,13L6.4,12.2L4.4,7.9L8,7.9Z" fill="#fff" stroke="#111" stroke-width="0.9"/></g></svg><svg class="ic" style="left:723.8px;top:26.8px;width:26.4px;height:26.4px" viewBox="0 0 24 24"><g opacity="0.6"><path d="M10,1.5l1.6,2.6l3,-0.8l0.4,3.1l3,0.9l-1.5,2.7l1.5,2.7l-3,0.9l-0.4,3.1l-3,-0.8L10,18.5l-1.6,-2.6l-3,0.8l-0.4,-3.1l-3,-0.9l1.5,-2.7L2,7.3l3,-0.9l0.4,-3.1l3,0.8Z" fill="#bfc5cc" stroke="#8a9098" stroke-width="0.9"/><circle cx="10" cy="10" r="4" fill="#e9f0f8" stroke="#8a9098"/><path d="M8.6,7.6v4.8l3.8,-2.4Z" fill="#7fa3d8"/><g transform="translate(13,11)"><path d="M0,0L0,11L2.6,8.6L4.6,13L6.4,12.2L4.4,7.9L8,7.9Z" fill="#fff" stroke="#111" stroke-width="0.9"/></g></g></svg><svg class="ic" style="left:772.8px;top:26.8px;width:26.4px;height:26.4px" viewBox="0 0 24 24"><rect x="2.5" y="2" width="10" height="10" fill="#f5dc40" stroke="#c9a820" stroke-width="0.9"/><rect x="14" y="2" width="6" height="12.5" fill="#ececec" stroke="#999" stroke-width="0.9"/><rect x="2.5" y="14.5" width="11" height="6.5" fill="#ececec" stroke="#999" stroke-width="0.9"/><g transform="translate(9.5,8) scale(1.1)"><path d="M0,0L0,11L2.6,8.6L4.6,13L6.4,12.2L4.4,7.9L8,7.9Z" fill="#fff" stroke="#111" stroke-width="0.9"/></g></svg><svg class="ic" style="left:818.8px;top:26.8px;width:26.4px;height:26.4px" viewBox="0 0 24 24"><rect x="2.5" y="3" width="13.5" height="13.5" fill="#f9e24c" stroke="#c9a820" stroke-width="1" stroke-dasharray="2 1.4"/><rect x="12.5" y="12" width="10" height="10" rx="2" fill="#dc2a36"/><circle cx="17.5" cy="17" r="3" fill="#f4c8cc" stroke="#fff" stroke-width="1.2"/><path d="M15.4,19.1l4.2,-4.2" stroke="#fff" stroke-width="1.3"/></svg><svg class="ic" style="left:856.8px;top:26.8px;width:26.4px;height:26.4px" viewBox="0 0 24 24"><text x="7.5" y="14" font-family="Liberation Serif" font-size="25" text-anchor="middle" fill="#5a2a70">&#949;</text><rect x="12" y="11.5" width="10" height="10" fill="#f5dc40" stroke="#c9a820" stroke-width="1" stroke-dasharray="2 1.4"/></svg><svg class="ic" style="left:893.3px;top:26.8px;width:26.4px;height:26.4px" viewBox="0 0 24 24"><rect x="3" y="3" width="18" height="18" fill="#fff" stroke="#3f6a94" stroke-width="1.5"/><rect x="3.7" y="3.7" width="16.6" height="4" fill="#c8dcf0"/><path d="M5.5,5.7h3M10.5,5.7h8.5" stroke="#2f5680" stroke-width="1.6"/><path d="M3,8.3h18" stroke="#3f6a94" stroke-width="1"/><path d="M5.5,11h3M10.5,11h8.5M5.5,13.8h3M10.5,13.8h8.5M5.5,16.6h3M10.5,16.6h8.5M5.5,19h3M10.5,19h8.5" stroke="#3f6a94" stroke-width="1.2"/></svg><svg class="ic" style="left:931.8px;top:26.8px;width:26.4px;height:26.4px" viewBox="0 0 24 24"><path d="M3.5,2V21M20.5,2V21M2,21.5H22" fill="none" stroke="#555" stroke-width="1.4"/><path d="M3.5,4.5h17M3.5,11h17M3.5,17.5h17" stroke="#555" stroke-width="1"/><circle cx="12.2" cy="4.5" r="2.1" fill="#fbe4e4" stroke="#d02a2a" stroke-width="1.2"/><circle cx="17" cy="4.5" r="2.1" fill="#fbe4e4" stroke="#d02a2a" stroke-width="1.2"/><circle cx="8" cy="11" r="2.1" fill="#e2f4e0" stroke="#4aa84a" stroke-width="1.2"/><circle cx="12.8" cy="11" r="2.1" fill="#e2f4e0" stroke="#4aa84a" stroke-width="1.2"/><circle cx="7.5" cy="17.5" r="2.1" fill="#deeaf8" stroke="#4a86c0" stroke-width="1.2"/><circle cx="16.8" cy="17.5" r="2.1" fill="#deeaf8" stroke="#4a86c0" stroke-width="1.2"/></svg><svg class="ic" style="left:974.8px;top:26.8px;width:26.4px;height:26.4px" viewBox="0 0 24 24"><path d="M4,6.5h15M4,4.3v4.4M19,4.3v4.4" stroke="#2f5680" stroke-width="1.4" fill="none"/><rect x="2.5" y="10.5" width="19" height="7" fill="#dfe4d8" stroke="#6a6a6a" stroke-width="1"/><path d="M5,10.5v3.4M7.4,10.5v2.2M9.8,10.5v3.4M12.2,10.5v2.2M14.6,10.5v3.4M17,10.5v2.2M19.2,10.5v3.4" stroke="#555" stroke-width="0.9"/></svg><svg class="ic" style="left:1019.8px;top:26.8px;width:26.4px;height:26.4px" viewBox="0 0 24 24"><path d="M4,3.5H20Q22,3.5 22,5.5V13Q22,15 20,15H11L7,20.5L7.5,15H4Q2,15 2,13V5.5Q2,3.5 4,3.5Z" fill="#f8e684" stroke="#c8a828" stroke-width="1.3" transform="translate(0.8,0.6) scale(0.92)"/></svg><svg class="ic" style="left:1057.8px;top:26.8px;width:26.4px;height:26.4px" viewBox="0 0 24 24"><rect x="2.5" y="5.5" width="14" height="11" fill="none" stroke="#555" stroke-width="1" stroke-dasharray="1.6 1.4"/><path d="M10.5,5.5v-2.5h4.5v2.5" fill="#f5dc40" stroke="#c9a820" stroke-width="0.9"/><rect x="14" y="13" width="9.5" height="9.5" rx="1.5" fill="#d2a60c"/><g transform="translate(0,0)"><path d="M18.75,14.5v6.5M16,16.1l5.5,3.3M21.5,16.1l-5.5,3.3" stroke="#fff" stroke-width="1.4"/></g></svg><svg class="ic" style="left:1094.8px;top:26.8px;width:26.4px;height:26.4px" viewBox="0 0 24 24"><rect x="3.5" y="5.5" width="15" height="11" fill="none" stroke="#555" stroke-width="1" stroke-dasharray="1.6 1.4"/><path d="M12,5.5v-2.5h4.5v2.5" fill="#f5dc40" stroke="#c9a820" stroke-width="0.9"/></svg><svg class="ic" style="left:1140.8px;top:26.8px;width:26.4px;height:26.4px" viewBox="0 0 24 24"><path d="M5,3H21V15.5H9.5L3,20.5L6.5,15.5H5Z" fill="#dfe9f5" stroke="#8a98aa" stroke-width="1.1"/><text x="13" y="13.2" font-family="Liberation Serif" font-weight="bold" font-size="11.5" text-anchor="middle" fill="#444">T</text></svg><svg class="ic" style="left:1192.3px;top:26.8px;width:26.4px;height:26.4px" viewBox="0 0 24 24"><rect x="3.5" y="2" width="18" height="20" rx="1" fill="#5b8fd6" stroke="#2b4a7c" stroke-width="1.1"/><rect x="3.5" y="2" width="3.5" height="20" fill="#1c2c48"/><text x="14.2" y="17" font-family="Liberation Serif" font-size="14" text-anchor="middle" fill="#fff">?</text></svg><svg class="ic" style="left:1229.8px;top:26.8px;width:26.4px;height:26.4px" viewBox="0 0 24 24"><g transform="translate(3.5,2.5) scale(1.15)"><path d="M0,0L0,11L2.6,8.6L4.6,13L6.4,12.2L4.4,7.9L8,7.9Z" fill="#fff" stroke="#111" stroke-width="0.9"/></g><text x="18" y="22" font-family="Liberation Sans" font-size="19" text-anchor="middle" fill="#111">?</text></svg><svg class="ic" style="left:14.8px;top:62.1px;width:26.4px;height:26.4px" viewBox="0 0 24 24"><g transform="translate(-4.5,1) scale(0.92)"><path d="M15.5,2.5L20,5L10,21.5L5.5,19Z" fill="#d9905a" stroke="#9a5a2a" stroke-width="0.9"/><path d="M17.7,3.8L8,20.2" stroke="#9a5a2a" stroke-width="0.8"/><path d="M15.5,2.5L20,5L19,6.6L14.5,4.1Z" fill="#e8e8e8" stroke="#999" stroke-width="0.6"/><path d="M5.5,19L10,21.5L4.6,23.6Z" fill="#e9dcc5" stroke="#777" stroke-width="0.7"/><path d="M4.6,23.6l1.6,-0.7l-1.2,-1Z" fill="#333"/></g><g transform="translate(0.5,1) scale(0.92)"><path d="M15.5,2.5L20,5L10,21.5L5.5,19Z" fill="#ee7a2a" stroke="#b3501a" stroke-width="0.9"/><path d="M17.7,3.8L8,20.2" stroke="#b3501a" stroke-width="0.8"/><path d="M15.5,2.5L20,5L19,6.6L14.5,4.1Z" fill="#e8e8e8" stroke="#999" stroke-width="0.6"/><path d="M5.5,19L10,21.5L4.6,23.6Z" fill="#e9dcc5" stroke="#777" stroke-width="0.7"/><path d="M4.6,23.6l1.6,-0.7l-1.2,-1Z" fill="#333"/></g></svg><svg class="ic" style="left:53.8px;top:62.1px;width:26.4px;height:26.4px" viewBox="0 0 24 24"><g transform=""><path d="M15.5,2.5L20,5L10,21.5L5.5,19Z" fill="#f0d43a" stroke="#b89a16" stroke-width="0.9"/><path d="M17.7,3.8L8,20.2" stroke="#b89a16" stroke-width="0.8"/><path d="M15.5,2.5L20,5L19,6.6L14.5,4.1Z" fill="#e8e8e8" stroke="#999" stroke-width="0.6"/><path d="M5.5,19L10,21.5L4.6,23.6Z" fill="#e9dcc5" stroke="#777" stroke-width="0.7"/><path d="M4.6,23.6l1.6,-0.7l-1.2,-1Z" fill="#333"/></g></svg><svg class="ic" style="left:91.8px;top:62.1px;width:26.4px;height:26.4px" viewBox="0 0 24 24"><g opacity="0.8"><rect x="3" y="2.5" width="18" height="19" rx="2" fill="#6f9bd1" stroke="#44699c" stroke-width="1"/><rect x="6" y="3.5" width="12" height="8.5" fill="#fff"/><path d="M7.5,6h9M7.5,8h9M7.5,10h9" stroke="#666" stroke-width="0.9"/><rect x="6.5" y="15" width="11" height="5.5" fill="#f3f3f3"/><rect x="8" y="16" width="2.6" height="3.6" fill="#2f4f7f"/></g><g transform="translate(10.5,7) scale(0.66)"><path d="M15.5,2.5L20,5L10,21.5L5.5,19Z" fill="#ee7a2a" stroke="#b3501a" stroke-width="0.9"/><path d="M17.7,3.8L8,20.2" stroke="#b3501a" stroke-width="0.8"/><path d="M15.5,2.5L20,5L19,6.6L14.5,4.1Z" fill="#e8e8e8" stroke="#999" stroke-width="0.6"/><path d="M5.5,19L10,21.5L4.6,23.6Z" fill="#e9dcc5" stroke="#777" stroke-width="0.7"/><path d="M4.6,23.6l1.6,-0.7l-1.2,-1Z" fill="#333"/></g></svg><svg class="ic" style="left:129.8px;top:62.1px;width:26.4px;height:26.4px" viewBox="0 0 24 24"><path d="M2.5,6.5C3,2.5 8,2 11,3.2C14.5,4.6 19,2 21,5.5C22.5,9 20,12.5 16.5,11.8C13.5,11.2 11.5,10.5 9,12.2C6,14 2,11 2.5,6.5Z" fill="#8fc98f" stroke="#5d8f5d" stroke-width="1" transform=""/><rect x="13" y="12.5" width="9.5" height="9.5" rx="1.5" fill="#d2a60c"/><g transform="translate(-1,-0.5)"><path d="M18.75,14.5v6.5M16,16.1l5.5,3.3M21.5,16.1l-5.5,3.3" stroke="#fff" stroke-width="1.4"/></g></svg><svg class="ic" style="left:167.8px;top:62.1px;width:26.4px;height:26.4px" viewBox="0 0 24 24"><path d="M2.5,6.5C3,2.5 8,2 11,3.2C14.5,4.6 19,2 21,5.5C22.5,9 20,12.5 16.5,11.8C13.5,11.2 11.5,10.5 9,12.2C6,14 2,11 2.5,6.5Z" fill="#8fc98f" stroke="#5d8f5d" stroke-width="1" transform=""/><rect x="13" y="12.5" width="9.5" height="9.5" rx="1.5" fill="#2f5fb8"/><path d="M14.6,17.2h4v-2.4l3.4,3.2l-3.4,3.2v-2.4h-4Z" fill="#fff"/></svg><svg class="ic" style="left:205.8px;top:62.1px;width:26.4px;height:26.4px" viewBox="0 0 24 24"><path d="M8,5L3,15.5" stroke="#444" stroke-width="1.1"/><path d="M8,5L19.5,4.2" stroke="#444" stroke-width="1.1"/><circle cx="8" cy="5" r="2.3" fill="#9bd69b" stroke="#4a7a4a" stroke-width="0.9"/><path d="M12,10L20,19.5" stroke="#c8781e" stroke-width="3" stroke-linecap="round"/><path d="M9.8,10.2l3.6,-3.4c1.6,0.2 2.8,1.2 3.2,2.6l-2,0.4l-2.6,2.6Z" fill="#e8e8e8" stroke="#444" stroke-width="0.9"/><path d="M18.5,10.5L11,18.5" stroke="#e8d838" stroke-width="1.8" stroke-linecap="round"/><path d="M17.4,9.4l2.2,2.2" stroke="#666" stroke-width="2.4"/></svg><svg class="ic" style="left:245.3px;top:62.1px;width:26.4px;height:26.4px" viewBox="0 0 24 24"><g opacity="0.6"><rect x="3" y="3.5" width="13" height="13" fill="#f5e680" stroke="#c9a820" stroke-width="1" stroke-dasharray="2 1.4"/><rect x="13.5" y="12.5" width="9.5" height="9.5" rx="1.5" fill="#e8505c"/><path d="M15.8,14.8l5,5m0,-5l-5,5" stroke="#fff" stroke-width="1.7"/></g></svg><svg class="ic" style="left:282.3px;top:62.1px;width:26.4px;height:26.4px" viewBox="0 0 24 24"><g opacity="0.5"><path d="M3,6L17,14.5M3,14L17,8" stroke="#888" stroke-width="1.6"/><ellipse cx="19" cy="8" rx="2.8" ry="1.9" fill="none" stroke="#d03030" stroke-width="1.5" transform="rotate(-25 19 8)"/><ellipse cx="19" cy="15.5" rx="2.8" ry="1.9" fill="none" stroke="#d03030" stroke-width="1.5" transform="rotate(25 19 15.5)"/></g></svg><svg class="ic" style="left:319.8px;top:62.1px;width:26.4px;height:26.4px" viewBox="0 0 24 24"><g opacity="0.45"><path d="M4,3.5H11L14,6.5V17H4Z" fill="#fff" stroke="#777"/><path d="M9,7.5H16L19,10.5V21H9Z" fill="#fff" stroke="#777"/><path d="M11,13h6M11,15.5h6M11,18h6" stroke="#888" stroke-width="0.9"/></g></svg><svg class="ic" style="left:357.3px;top:62.1px;width:26.4px;height:26.4px" viewBox="0 0 24 24"><g opacity="0.5"><rect x="4" y="4" width="16" height="18" rx="1.5" fill="#f2dcc0" stroke="#c09050" stroke-width="1.2"/><rect x="6.5" y="7" width="11" height="13" fill="#fff" stroke="#999" stroke-width="0.8"/><rect x="8.5" y="2.5" width="7" height="3.5" rx="1" fill="#ddd" stroke="#888" stroke-width="0.8"/><path d="M8.5,11h7M8.5,13.5h7M8.5,16h7" stroke="#999" stroke-width="0.9"/></g></svg><svg class="ic" style="left:404.3px;top:62.1px;width:26.4px;height:26.4px" viewBox="0 0 24 24"><g transform="translate(0,1.5)"><g opacity="1.0"><path d="M1.5,8.5L5.5,3.5H20.5V13.5H5.5Z" fill="#f2d02c" stroke="#b8960c" stroke-width="0.9"/><text x="13.3" y="11.4" font-family="Liberation Sans" font-weight="bold" font-size="7.6" text-anchor="middle" fill="#222">abc</text></g></g></svg><svg class="ic" style="left:442.3px;top:62.1px;width:26.4px;height:26.4px" viewBox="0 0 24 24"><rect x="1" y="4.5" width="21.5" height="16" fill="#dce8fa" stroke="#5b8fd6" stroke-width="1"/><g transform="translate(2,3.2) scale(0.82)"><g opacity="1.0"><path d="M1.5,8.5L5.5,3.5H16.5V13.5H5.5Z" fill="#f2d02c" stroke="#b8960c" stroke-width="0.9"/><text x="11.3" y="11.4" font-family="Liberation Sans" font-weight="bold" font-size="7.6" text-anchor="middle" fill="#222">ab</text></g></g><circle cx="17.3" cy="16.2" r="3.9" fill="#c81824"/><circle cx="16.2" cy="15" r="1.2" fill="#e86a70"/><path d="M16.8,8v5.5" stroke="#f4f4f4" stroke-width="1.8"/><path d="M17.6,8v5.5" stroke="#999" stroke-width="0.6"/></svg><svg class="ic" style="left:480.3px;top:62.1px;width:26.4px;height:26.4px" viewBox="0 0 24 24"><g opacity="0.6"><g transform="translate(1,1.5)"><g opacity="1.0"><path d="M1.5,8.5L5.5,3.5H16.5V13.5H5.5Z" fill="#f2d02c" stroke="#b8960c" stroke-width="0.9"/><text x="11.3" y="11.4" font-family="Liberation Sans" font-weight="bold" font-size="7.6" text-anchor="middle" fill="#222">ab</text></g></g><circle cx="17.8" cy="17" r="4.3" fill="#c84858"/><path d="M17,7v7" stroke="#f4f4f4" stroke-width="1.8"/><path d="M17.9,7v7" stroke="#999" stroke-width="0.6"/></g></svg><svg class="ic" style="left:518.3px;top:62.1px;width:26.4px;height:26.4px" viewBox="0 0 24 24"><g opacity="0.6"><g transform="translate(0,1.5)"><g opacity="1.0"><path d="M1.5,8.5L5.5,3.5H20.5V13.5H5.5Z" fill="#f2d02c" stroke="#b8960c" stroke-width="0.9"/><text x="13.3" y="11.4" font-family="Liberation Sans" font-weight="bold" font-size="7.6" text-anchor="middle" fill="#222">abc</text></g></g><path d="M8,18.3Q15,12.3 22,18.3Q15,23.6 8,18.3Z" fill="#fff" stroke="#555" stroke-width="0.9"/><circle cx="15" cy="18" r="2.6" fill="#6f9bd1"/><circle cx="15" cy="18" r="1.1" fill="#223"/></g></svg><svg class="ic" style="left:556.8px;top:62.1px;width:26.4px;height:26.4px" viewBox="0 0 24 24"><g opacity="0.6"><g transform="translate(0,1.5)"><g opacity="1.0"><path d="M1.5,8.5L5.5,3.5H20.5V13.5H5.5Z" fill="#f2d02c" stroke="#b8960c" stroke-width="0.9"/><text x="13.3" y="11.4" font-family="Liberation Sans" font-weight="bold" font-size="7.6" text-anchor="middle" fill="#222">abc</text></g></g><rect x="13.5" y="13" width="9.5" height="9.5" rx="1.5" fill="#3d6fc4"/><path d="M15,17.5h4v-2.2l3,2.5l-3,2.5v-2.2h-4Z" fill="#fff"/></g></svg><svg class="ic" style="left:594.3px;top:62.1px;width:26.4px;height:26.4px" viewBox="0 0 24 24"><g opacity="0.6"><g transform="translate(0,1.5)"><g opacity="1.0"><path d="M1.5,8.5L5.5,3.5H20.5V13.5H5.5Z" fill="#f2d02c" stroke="#b8960c" stroke-width="0.9"/><text x="13.3" y="11.4" font-family="Liberation Sans" font-weight="bold" font-size="7.6" text-anchor="middle" fill="#222">abc</text></g></g><rect x="13.5" y="13" width="9.5" height="9.5" rx="1.5" fill="#3d6fc4"/><path d="M16,19.5a2.6,2.6 0 1 0 0,-3.6" fill="none" stroke="#fff" stroke-width="1.3"/><path d="M15,15l1.2,2.4l2,-1.4Z" fill="#fff"/></g></svg><svg class="ic" style="left:632.8px;top:62.1px;width:26.4px;height:26.4px" viewBox="0 0 24 24"><g transform="translate(0,1.5)"><g opacity="1.0"><path d="M1.5,8.5L5.5,3.5H20.5V13.5H5.5Z" fill="#f2d02c" stroke="#b8960c" stroke-width="0.9"/><text x="13.3" y="11.4" font-family="Liberation Sans" font-weight="bold" font-size="7.6" text-anchor="middle" fill="#222">abc</text></g></g><rect x="13.5" y="13" width="9.5" height="9.5" rx="1.5" fill="#d2a60c"/><path d="M15.5,21l5.5,-5.5" stroke="#fff" stroke-width="2"/><path d="M15,21.5l0.6,-2l1.4,1.4Z" fill="#fff"/></svg><svg class="ic" style="left:15.8px;top:98.8px;width:26.4px;height:26.4px" viewBox="0 0 24 24"><path d="M3,9L10,3V6.5C16,6.5 20,9.5 20,14C20,18 16.5,20.5 12,20.5V17C14.5,17 16,15.8 16,14C16,12 14,11 10,11V15Z" fill="#7fc27f" stroke="#4a8a4a" stroke-width="1" stroke-linejoin="round"/></svg><svg class="ic" style="left:53.8px;top:98.8px;width:26.4px;height:26.4px" viewBox="0 0 24 24"><path d="M21,9L14,3V6.5C8,6.5 4,9.5 4,14C4,18 7.5,20.5 12,20.5V17C9.5,17 8,15.8 8,14C8,12 10,11 14,11V15Z" fill="#b7dcb7" stroke="#8fc08f" stroke-width="1" stroke-linejoin="round" opacity="0.8"/></svg><svg class="ic" style="left:91.8px;top:98.8px;width:26.4px;height:26.4px" viewBox="0 0 24 24"><path d="M2.5,6.5C3,2.5 8,2 11,3.2C14.5,4.6 19,2 21,5.5C22.5,9 20,12.5 16.5,11.8C13.5,11.2 11.5,10.5 9,12.2C6,14 2,11 2.5,6.5Z" fill="#8fc98f" stroke="#5d8f5d" stroke-width="1" transform=""/><rect x="13" y="12.5" width="9.5" height="9.5" rx="1.5" fill="#1f3f98"/><path d="M15.2,19a2.8,2.8 0 1 0 0.6,-3.6" fill="none" stroke="#fff" stroke-width="1.3"/><path d="M14.3,14.6l0.6,2.8l2.2,-1.4Z" fill="#fff"/></svg><svg class="ic" style="left:129.8px;top:98.8px;width:26.4px;height:26.4px" viewBox="0 0 24 24"><circle cx="9" cy="8.5" r="7" fill="#8fc98f" stroke="#5d8f5d"/><path d="M10,15.5L13.5,9.5H20L23,15.5L20,21.5H13.5Z" fill="#8fb9e0" stroke="#4a78a8" stroke-width="1"/><path d="M8,7.5C11,5.5 15.5,8 16.5,15.5M14,13.5l2.5,2.6l2.2,-3" fill="none" stroke="#333" stroke-width="1.2"/></svg><svg class="ic" style="left:167.8px;top:98.8px;width:26.4px;height:26.4px" viewBox="0 0 24 24"><path d="M2.5,6.5C3,2.5 8,2 11,3.2C14.5,4.6 19,2 21,5.5C22.5,9 20,12.5 16.5,11.8C13.5,11.2 11.5,10.5 9,12.2C6,14 2,11 2.5,6.5Z" fill="#8fc98f" stroke="#5d8f5d" stroke-width="1" transform=""/><path d="M6,6.5C8,4.5 11.5,6 13,6.8C14.5,7.6 15,8.5 12.5,9C10,9.5 5,9.5 6,6.5Z" fill="#ececec" stroke="#5d8f5d" stroke-width="0.9"/><rect x="13" y="12.5" width="9.5" height="9.5" rx="1.5" fill="#d2a60c"/><g transform="translate(-1,-0.5)"><path d="M18.75,14.5v6.5M16,16.1l5.5,3.3M21.5,16.1l-5.5,3.3" stroke="#fff" stroke-width="1.4"/></g></svg><svg class="ic" style="left:205.8px;top:98.8px;width:26.4px;height:26.4px" viewBox="0 0 24 24"><path d="M2.5,6.5C3,2.5 8,2 11,3.2C14.5,4.6 19,2 21,5.5C22.5,9 20,12.5 16.5,11.8C13.5,11.2 11.5,10.5 9,12.2C6,14 2,11 2.5,6.5Z" fill="#a9a9a9" stroke="#6d6d6d" stroke-width="1" transform=""/><path d="M3,17C3,13.5 8,13 9.5,15.5C11,18 9,21.5 6,21C4,20.7 3,19 3,17Z" fill="#8fc98f" stroke="#5d8f5d"/><rect x="13" y="12.5" width="9.5" height="9.5" rx="1.5" fill="#d2a60c"/><g transform="translate(-1,-0.5)"><path d="M18.75,14.5v6.5M16,16.1l5.5,3.3M21.5,16.1l-5.5,3.3" stroke="#fff" stroke-width="1.4"/></g></svg><svg class="ic" style="left:245.3px;top:98.8px;width:26.4px;height:26.4px" viewBox="0 0 24 24"><path d="M2.5,6.5C3,2.5 8,2 11,3.2C14.5,4.6 19,2 21,5.5C22.5,9 20,12.5 16.5,11.8C13.5,11.2 11.5,10.5 9,12.2C6,14 2,11 2.5,6.5Z" fill="#8fc98f" stroke="#5d8f5d" stroke-width="1" transform=""/><path d="M6,6.5C8,4.5 11.5,6 13,6.8C14.5,7.6 15,8.5 12.5,9C10,9.5 5,9.5 6,6.5Z" fill="#ececec" stroke="#5d8f5d" stroke-width="0.9"/><rect x="13" y="12.5" width="9.5" height="9.5" rx="1.5" fill="#e8505c"/><path d="M15.3,14.8l5,5m0,-5l-5,5" stroke="#fff" stroke-width="1.7"/></svg><svg class="ic" style="left:282.3px;top:98.8px;width:26.4px;height:26.4px" viewBox="0 0 24 24"><path d="M2.5,6.5C3,2.5 8,2 11,3.2C14.5,4.6 19,2 21,5.5C22.5,9 20,12.5 16.5,11.8C13.5,11.2 11.5,10.5 9,12.2C6,14 2,11 2.5,6.5Z" fill="#a9a9a9" stroke="#6d6d6d" stroke-width="1" transform=""/><path d="M3,17C3,13.5 8,13 9.5,15.5C11,18 9,21.5 6,21C4,20.7 3,19 3,17Z" fill="#8fc98f" stroke="#5d8f5d"/><rect x="13" y="12.5" width="9.5" height="9.5" rx="1.5" fill="#e8505c"/><path d="M15.3,14.8l5,5m0,-5l-5,5" stroke="#fff" stroke-width="1.7"/></svg><svg class="ic" style="left:319.8px;top:98.8px;width:26.4px;height:26.4px" viewBox="0 0 24 24"><path d="M3,9C3,4.5 8,4 11.5,5.2C15.5,6.6 19.5,4 21.5,7.5C23,11.5 20.5,15.5 16.5,14.8C13.5,14.2 11,13.5 9,15.2L3.5,12.5Z" fill="#6fb56f" stroke="#4a8a4a" stroke-width="1"/><path d="M3,10.5C5,13 8,13.8 10,13.4C11,15.5 9.5,18.5 7,19C4,19.5 2.5,15 3,10.5Z" fill="#f4dc3c" stroke="#c4a81c" stroke-width="0.9"/></svg><svg class="ic" style="left:357.3px;top:98.8px;width:26.4px;height:26.4px" viewBox="0 0 24 24"><g opacity="0.75"><path d="M2.5,9C3,4 8,3.5 11.5,4.7C15.5,6 19.5,3.5 21.5,7C23,11.5 20.5,16.5 16.5,17.5C13,18.4 9,18.5 6.5,16.5C3.8,14.5 2.2,12 2.5,9Z" fill="#f2eaa0" stroke="#cdbb4a" stroke-width="1.6"/><path d="M6,9.5C6.5,7 9,7 11.5,8C14.5,9 17,7.5 18.5,9C19.5,11 18,14 15.5,14.5C12.5,15 10,15 8,13.5C6.5,12.5 5.8,11 6,9.5Z" fill="#c8d8b0" stroke="#b0b890" stroke-width="0.9"/></g></svg><svg class="ic" style="left:395.3px;top:98.8px;width:26.4px;height:26.4px" viewBox="0 0 24 24"><path d="M2.5,6.5C3,2.5 8,2 11,3.2C14.5,4.6 19,2 21,5.5C22.5,9 20,12.5 16.5,11.8C13.5,11.2 11.5,10.5 9,12.2C6,14 2,11 2.5,6.5Z" fill="#8fc98f" stroke="#5d8f5d" stroke-width="1" transform=""/><path d="M11,3.5L13,13" stroke="#777" stroke-width="1.8"/><path d="M14.5,3.5L12,13" stroke="#999" stroke-width="1.8"/><ellipse cx="10.2" cy="17.5" rx="2" ry="3.4" fill="none" stroke="#d02020" stroke-width="1.7" transform="rotate(18 10.2 17.5)"/><ellipse cx="15.2" cy="17.5" rx="2" ry="3.4" fill="none" stroke="#d02020" stroke-width="1.7" transform="rotate(-18 15.2 17.5)"/></svg><svg class="ic" style="left:433.8px;top:98.8px;width:26.4px;height:26.4px" viewBox="0 0 24 24"><g opacity="0.5"><path d="M2.5,6.5C3,2.5 8,2 11.5,4.5L12,14C9,16.5 5,15.5 3.5,12.5C2.5,10.5 2.3,8 2.5,6.5Z" fill="#8fc98f" stroke="#4a7a4a"/><path d="M21.5,6.5C21,2.5 16,2 12.5,4.5L12,14C15,16.5 19,15.5 20.5,12.5C21.5,10.5 21.7,8 21.5,6.5Z" fill="#8fc98f" stroke="#4a7a4a"/><path d="M9.5,6h5M9.5,8.5h5M9.5,11h5" stroke="#555" stroke-width="0.9"/><path d="M12,14C10,17 14,18 12,21" fill="none" stroke="#555" stroke-width="1"/></g></svg><svg class="ic" style="left:471.3px;top:98.8px;width:26.4px;height:26.4px" viewBox="0 0 24 24"><g opacity="0.55"><path d="M13,2.5L19.5,5L15,12.5L11,11Z" fill="#c4c8cc" stroke="#80868c" stroke-width="0.9"/><path d="M11,11L15,12.5L13.5,15L11.5,14.2Z" fill="#9aa0a8" stroke="#80868c" stroke-width="0.7"/><path d="M12.3,14.8L11.5,18" stroke="#80868c" stroke-width="1.2"/><rect x="3" y="17.5" width="18" height="4.5" fill="#8fb0cc" stroke="#5f809c" stroke-width="0.9"/><path d="M10,17.5L12,20L14,17.5" fill="#dfe8f0" stroke="#5f809c" stroke-width="0.7"/></g></svg><svg class="ic" style="left:508.8px;top:98.8px;width:26.4px;height:26.4px" viewBox="0 0 24 24"><path d="M12.5,4A8,8 0 1 0 20.5,12" fill="none" stroke="#b9cdee" stroke-width="3"/><path d="M12.5,4A8,8 0 0 1 19.8,9" fill="none" stroke="#7fa3e0" stroke-width="3"/><path d="M16.5,9.5L22.5,5.5L22.5,12.5Z" fill="#7fa3e0" stroke="#5f83c0" stroke-width="0.7"/></svg><div class="dd" style="left:751.0px;top:42.8px"></div><div class="dd" style="left:800.5px;top:42.8px"></div><div class="dd" style="left:1002.5px;top:42.8px"></div><div class="dd" style="left:1166.5px;top:42.8px"></div><div class="dd" style="left:35.5px;top:81.8px"></div>
<div id="ltb"></div>
<svg class="abs" style="left:7.549999999999997px;top:136.45px;width:37px;height:6px" viewBox="0 0 37 6"><rect x="0" y="0" width="1" height="1" fill="#ffffff"/><rect x="1" y="1" width="1.1" height="1.1" fill="#a2a2a2"/><rect x="1" y="0" width="1" height="1" fill="#e9e9e9" opacity="0.6"/><rect x="0" y="1" width="1" height="1" fill="#e9e9e9" opacity="0.6"/><rect x="3" y="3" width="1" height="1" fill="#ffffff"/><rect x="4" y="4" width="1.1" height="1.1" fill="#a2a2a2"/><rect x="4" y="3" width="1" height="1" fill="#e9e9e9" opacity="0.6"/><rect x="3" y="4" width="1" height="1" fill="#e9e9e9" opacity="0.6"/><rect x="6" y="0" width="1" height="1" fill="#ffffff"/><rect x="7" y="1" width="1.1" height="1.1" fill="#a2a2a2"/><rect x="7" y="0" width="1" height="1" fill="#e9e9e9" opacity="0.6"/><rect x="6" y="1" width="1" height="1" fill="#e9e9e9" opacity="0.6"/><rect x="9" y="3" width="1" height="1" fill="#ffffff"/><rect x="10" y="4" width="1.1" height="1.1" fill="#a2a2a2"/><rect x="10" y="3" width="1" height="1" fill="#e9e9e9" opacity="0.6"/><rect x="9" y="4" width="1" height="1" fill="#e9e9e9" opacity="0.6"/><rect x="12" y="0" width="1" height="1" fill="#ffffff"/><rect x="13" y="1" width="1.1" height="1.1" fill="#a2a2a2"/><rect x="13" y="0" width="1" height="1" fill="#e9e9e9" opacity="0.6"/><rect x="12" y="1" width="1" height="1" fill="#e9e9e9" opacity="0.6"/><rect x="15" y="3" width="1" height="1" fill="#ffffff"/><rect x="16" y="4" width="1.1" height="1.1" fill="#a2a2a2"/><rect x="16" y="3" width="1" height="1" fill="#e9e9e9" opacity="0.6"/><rect x="15" y="4" width="1" height="1" fill="#e9e9e9" opacity="0.6"/><rect x="18" y="0" width="1" height="1" fill="#ffffff"/><rect x="19" y="1" width="1.1" height="1.1" fill="#a2a2a2"/><rect x="19" y="0" width="1" height="1" fill="#e9e9e9" opacity="0.6"/><rect x="18" y="1" width="1" height="1" fill="#e9e9e9" opacity="0.6"/><rect x="21" y="3" width="1" height="1" fill="#ffffff"/><rect x="22" y="4" width="1.1" height="1.1" fill="#a2a2a2"/><rect x="22" y="3" width="1" height="1" fill="#e9e9e9" opacity="0.6"/><rect x="21" y="4" width="1" height="1" fill="#e9e9e9" opacity="0.6"/><rect x="24" y="0" width="1" height="1" fill="#ffffff"/><rect x="25" y="1" width="1.1" height="1.1" fill="#a2a2a2"/><rect x="25" y="0" width="1" height="1" fill="#e9e9e9" opacity="0.6"/><rect x="24" y="1" width="1" height="1" fill="#e9e9e9" opacity="0.6"/><rect x="27" y="3" width="1" height="1" fill="#ffffff"/><rect x="28" y="4" width="1.1" height="1.1" fill="#a2a2a2"/><rect x="28" y="3" width="1" height="1" fill="#e9e9e9" opacity="0.6"/><rect x="27" y="4" width="1" height="1" fill="#e9e9e9" opacity="0.6"/><rect x="30" y="0" width="1" height="1" fill="#ffffff"/><rect x="31" y="1" width="1.1" height="1.1" fill="#a2a2a2"/><rect x="31" y="0" width="1" height="1" fill="#e9e9e9" opacity="0.6"/><rect x="30" y="1" width="1" height="1" fill="#e9e9e9" opacity="0.6"/><rect x="33" y="3" width="1" height="1" fill="#ffffff"/><rect x="34" y="4" width="1.1" height="1.1" fill="#a2a2a2"/><rect x="34" y="3" width="1" height="1" fill="#e9e9e9" opacity="0.6"/><rect x="33" y="4" width="1" height="1" fill="#e9e9e9" opacity="0.6"/></svg><svg class="abs" style="left:7.549999999999997px;top:563.45px;width:37px;height:6px" viewBox="0 0 37 6"><rect x="0" y="0" width="1" height="1" fill="#ffffff"/><rect x="1" y="1" width="1.1" height="1.1" fill="#a2a2a2"/><rect x="1" y="0" width="1" height="1" fill="#e9e9e9" opacity="0.6"/><rect x="0" y="1" width="1" height="1" fill="#e9e9e9" opacity="0.6"/><rect x="3" y="3" width="1" height="1" fill="#ffffff"/><rect x="4" y="4" width="1.1" height="1.1" fill="#a2a2a2"/><rect x="4" y="3" width="1" height="1" fill="#e9e9e9" opacity="0.6"/><rect x="3" y="4" width="1" height="1" fill="#e9e9e9" opacity="0.6"/><rect x="6" y="0" width="1" height="1" fill="#ffffff"/><rect x="7" y="1" width="1.1" height="1.1" fill="#a2a2a2"/><rect x="7" y="0" width="1" height="1" fill="#e9e9e9" opacity="0.6"/><rect x="6" y="1" width="1" height="1" fill="#e9e9e9" opacity="0.6"/><rect x="9" y="3" width="1" height="1" fill="#ffffff"/><rect x="10" y="4" width="1.1" height="1.1" fill="#a2a2a2"/><rect x="10" y="3" width="1" height="1" fill="#e9e9e9" opacity="0.6"/><rect x="9" y="4" width="1" height="1" fill="#e9e9e9" opacity="0.6"/><rect x="12" y="0" width="1" height="1" fill="#ffffff"/><rect x="13" y="1" width="1.1" height="1.1" fill="#a2a2a2"/><rect x="13" y="0" width="1" height="1" fill="#e9e9e9" opacity="0.6"/><rect x="12" y="1" width="1" height="1" fill="#e9e9e9" opacity="0.6"/><rect x="15" y="3" width="1" height="1" fill="#ffffff"/><rect x="16" y="4" width="1.1" height="1.1" fill="#a2a2a2"/><rect x="16" y="3" width="1" height="1" fill="#e9e9e9" opacity="0.6"/><rect x="15" y="4" width="1" height="1" fill="#e9e9e9" opacity="0.6"/><rect x="18" y="0" width="1" height="1" fill="#ffffff"/><rect x="19" y="1" width="1.1" height="1.1" fill="#a2a2a2"/><rect x="19" y="0" width="1" height="1" fill="#e9e9e9" opacity="0.6"/><rect x="18" y="1" width="1" height="1" fill="#e9e9e9" opacity="0.6"/><rect x="21" y="3" width="1" height="1" fill="#ffffff"/><rect x="22" y="4" width="1.1" height="1.1" fill="#a2a2a2"/><rect x="22" y="3" width="1" height="1" fill="#e9e9e9" opacity="0.6"/><rect x="21" y="4" width="1" height="1" fill="#e9e9e9" opacity="0.6"/><rect x="24" y="0" width="1" height="1" fill="#ffffff"/><rect x="25" y="1" width="1.1" height="1.1" fill="#a2a2a2"/><rect x="25" y="0" width="1" height="1" fill="#e9e9e9" opacity="0.6"/><rect x="24" y="1" width="1" height="1" fill="#e9e9e9" opacity="0.6"/><rect x="27" y="3" width="1" height="1" fill="#ffffff"/><rect x="28" y="4" width="1.1" height="1.1" fill="#a2a2a2"/><rect x="28" y="3" width="1" height="1" fill="#e9e9e9" opacity="0.6"/><rect x="27" y="4" width="1" height="1" fill="#e9e9e9" opacity="0.6"/><rect x="30" y="0" width="1" height="1" fill="#ffffff"/><rect x="31" y="1" width="1.1" height="1.1" fill="#a2a2a2"/><rect x="31" y="0" width="1" height="1" fill="#e9e9e9" opacity="0.6"/><rect x="30" y="1" width="1" height="1" fill="#e9e9e9" opacity="0.6"/><rect x="33" y="3" width="1" height="1" fill="#ffffff"/><rect x="34" y="4" width="1.1" height="1.1" fill="#a2a2a2"/><rect x="34" y="3" width="1" height="1" fill="#e9e9e9" opacity="0.6"/><rect x="33" y="4" width="1" height="1" fill="#e9e9e9" opacity="0.6"/></svg><svg class="ic" style="left:10.5px;top:145.3px;width:26px;height:26px" viewBox="0 0 24 24"><path d="M4.5,4L9.5,18L14.5,5.5L20.5,3.5" fill="none" stroke="#3c5a7a" stroke-width="1.3"/><circle cx="4.5" cy="4" r="1.7" fill="#fff" stroke="#3c5a7a"/><circle cx="9.5" cy="18" r="1.7" fill="#fff" stroke="#3c5a7a"/><circle cx="14.5" cy="5.5" r="1.7" fill="#fff" stroke="#3c5a7a"/><circle cx="20.5" cy="3.5" r="1.7" fill="#fff" stroke="#3c5a7a"/><rect x="14" y="13.5" width="9.5" height="9.5" rx="1.5" fill="#5d9a55"/><path d="M18.75,15.3v6M15.8,18.25h6" stroke="#fff" stroke-width="2"/></svg><svg class="ic" style="left:10.5px;top:183.3px;width:26px;height:26px" viewBox="0 0 24 24"><rect x="2" y="2" width="16" height="16" fill="#7ea4d4"/><path d="M2,2h5.3v5.3H2ZM12.7,2H18v5.3h-5.3ZM7.3,7.3h5.4v5.4H7.3ZM2,12.7h5.3V18H2ZM12.7,12.7H18V18h-5.3Z" fill="#1f3f78"/><path d="M7.3,2h5.4v5.3H7.3Z" fill="#4f74a8"/><rect x="14" y="13.5" width="9.5" height="9.5" rx="1.5" fill="#5d9a55"/><path d="M18.75,15.3v6M15.8,18.25h6" stroke="#fff" stroke-width="2"/></svg><svg class="ic" style="left:10.5px;top:220.3px;width:26px;height:26px" viewBox="0 0 24 24"><path d="M4,3C7,0.5 14,0.5 16.5,3C19,5.5 18.5,10 16,12C15.5,14 16,16 17.5,16.5C15,18 12.5,17 12,13.5C11,14 10.5,15 10.8,19.5C8.5,19.5 8,17 8,14C4.5,13 1.5,9 4,3Z" fill="#3f6fb0" stroke="#1f3f78" stroke-width="0.9"/><path d="M8,5C7,8 8,11 9,13M12.5,4.5C13.5,7 13,10 12,12.5" fill="none" stroke="#c8dcf4" stroke-width="1"/><circle cx="13.8" cy="6" r="0.8" fill="#fff"/><rect x="14" y="13.5" width="9.5" height="9.5" rx="1.5" fill="#5d9a55"/><path d="M18.75,15.3v6M15.8,18.25h6" stroke="#fff" stroke-width="2"/></svg><svg class="ic" style="left:10.5px;top:259.8px;width:26px;height:26px" viewBox="0 0 24 24"><path d="M2.5,21C4,14 8,6 20.5,1.5C20,7 16,13.5 8.5,15C6,15.5 4.5,17.5 2.5,21Z" fill="#8fb4e4" stroke="#2b4a7c" stroke-width="1"/><path d="M3,20.5C7,13 12,7 20,2" fill="none" stroke="#2b4a7c" stroke-width="1"/><path d="M8,12l8,-2M10.5,9.5l7.5,-3M13.5,7l5,-3.2" stroke="#dfeafa" stroke-width="0.9"/><rect x="14" y="13.5" width="9.5" height="9.5" rx="1.5" fill="#5d9a55"/><path d="M18.75,15.3v6M15.8,18.25h6" stroke="#fff" stroke-width="2"/></svg><svg class="ic" style="left:10.5px;top:297.3px;width:26px;height:26px" viewBox="0 0 24 24"><path d="M2.5,2C11,3 18,8 21.5,14.5L3,20.5C6.5,15 6.5,8 2.5,2Z" fill="#3f6fb0" stroke="#14305c" stroke-width="1"/><path d="M6.5,4C9.5,8.5 9.5,14 7.5,19M10.5,5.5C13.5,9.5 13.5,14 12,17.5M14.5,8.5C16.5,11.5 17,14 16.5,16" fill="none" stroke="#14305c" stroke-width="1"/><rect x="14" y="13.5" width="9.5" height="9.5" rx="1.5" fill="#5d9a55"/><path d="M18.75,15.3v6M15.8,18.25h6" stroke="#fff" stroke-width="2"/></svg><svg class="ic" style="left:10.5px;top:336.3px;width:26px;height:26px" viewBox="0 0 24 24"><ellipse cx="11" cy="10" rx="9.5" ry="8.5" fill="#dfe9f7" stroke="#6f8fc0" stroke-width="1.2"/><path d="M1.5,10h19M11,1.5v17M3.5,5.5h15M3.5,14.5h15M11,1.5C5,4 5,16 11,18.5M11,1.5C17,4 17,16 11,18.5" fill="none" stroke="#6f8fc0" stroke-width="0.9"/><path d="M4,6l3,-1.5l3,1l-1,3l-3,1.5ZM12,4.5l4.5,0.5l1.5,3.5l-3.5,1.5l-2.5,-2.5ZM6.5,12.5l4,-1l2.5,3.5l-3,2.5Z" fill="#4f78b4" opacity="0.85"/><rect x="14" y="13.5" width="9.5" height="9.5" rx="1.5" fill="#5d9a55"/><path d="M18.75,15.3v6M15.8,18.25h6" stroke="#fff" stroke-width="2"/></svg><svg class="ic" style="left:10.5px;top:373.3px;width:26px;height:26px" viewBox="0 0 24 24"><ellipse cx="11" cy="10" rx="9.5" ry="8.5" fill="#e8f0fa" stroke="#1f3f78" stroke-width="1.2"/><path d="M1.5,10h19M11,1.5v17M3.5,5.5h15M3.5,14.5h15M11,1.5C5,4 5,16 11,18.5M11,1.5C17,4 17,16 11,18.5" fill="none" stroke="#1f3f78" stroke-width="0.9"/><path d="M2.5,7h17M1.8,12.5h18.4" stroke="#1f3f78" stroke-width="2.4"/><rect x="7" y="8.5" width="8" height="3.5" fill="#1f3f78"/><rect x="14" y="13.5" width="9.5" height="9.5" rx="1.5" fill="#5d9a55"/><path d="M18.75,15.3v6M15.8,18.25h6" stroke="#fff" stroke-width="2"/></svg><svg class="ic" style="left:10.5px;top:411.8px;width:26px;height:26px" viewBox="0 0 24 24"><ellipse cx="11" cy="10" rx="9.5" ry="8.5" fill="#eef4fc" stroke="#5b8fd6" stroke-width="1.2"/><path d="M1.5,10h19M11,1.5v17M3.5,5.5h15M3.5,14.5h15M11,1.5C5,4 5,16 11,18.5M11,1.5C17,4 17,16 11,18.5" fill="none" stroke="#5b8fd6" stroke-width="0.9"/><path d="M5.5,5L10,15L14,6L18,5" fill="none" stroke="#222" stroke-width="1.3"/><circle cx="5.5" cy="5" r="1.4" fill="#fff" stroke="#222"/><circle cx="10" cy="15" r="1.4" fill="#fff" stroke="#222"/><circle cx="14" cy="6" r="1.4" fill="#fff" stroke="#222"/><circle cx="18" cy="5" r="1.4" fill="#fff" stroke="#222"/><rect x="14" y="13.5" width="9.5" height="9.5" rx="1.5" fill="#5d9a55"/><path d="M18.75,15.3v6M15.8,18.25h6" stroke="#fff" stroke-width="2"/></svg><svg class="ic" style="left:10.5px;top:450.3px;width:26px;height:26px" viewBox="0 0 24 24"><path d="M9,2.5C12.5,2 15,4.5 14.5,8.5C14,12.5 11,16 6.5,18L5.5,16.5C8.5,14.5 10,12.5 10.2,10.8C7.5,11.3 5.5,9.5 5.6,7C5.7,4.5 7,3 9,2.5Z" fill="#5b86c4" stroke="#2b4a7c" stroke-width="1"/><rect x="14" y="13.5" width="9.5" height="9.5" rx="1.5" fill="#5d9a55"/><path d="M18.75,15.3v6M15.8,18.25h6" stroke="#fff" stroke-width="2"/></svg><svg class="ic" style="left:10.5px;top:487.8px;width:26px;height:26px" viewBox="0 0 24 24"><path d="M4.5,4L9.5,18L14.5,5.5L20.5,3.5" fill="none" stroke="#3c5a7a" stroke-width="1.3"/><circle cx="4.5" cy="4" r="1.7" fill="#fff" stroke="#3c5a7a"/><circle cx="9.5" cy="18" r="1.7" fill="#fff" stroke="#3c5a7a"/><circle cx="14.5" cy="5.5" r="1.7" fill="#fff" stroke="#3c5a7a"/><circle cx="20.5" cy="3.5" r="1.7" fill="#fff" stroke="#3c5a7a"/><rect x="14" y="13.5" width="9.5" height="9.5" rx="1.5" fill="#d2a60c"/><g transform="translate(0,0.5)"><path d="M18.75,14.5v6.5M16,16.1l5.5,3.3M21.5,16.1l-5.5,3.3" stroke="#fff" stroke-width="1.4"/></g></svg><svg class="ic" style="left:10.5px;top:526.8px;width:26px;height:26px" viewBox="0 0 24 24"><rect x="2.5" y="2.5" width="18" height="18" fill="#f0f0f0" stroke="#888" stroke-width="1"/><rect x="14" y="13.5" width="9.5" height="9.5" rx="1.5" fill="#e8505c"/><path d="M15.8,18.25h6" stroke="#fff" stroke-width="2.2"/></svg><div class="dd" style="left:38.0px;top:503.8px"></div>
<div id="lhead">Layers</div>
<svg class="abs" style="left:50.5px;top:134.0px;width:15px;height:15px" viewBox="0 0 15 15"><circle cx="7.5" cy="7.5" r="7" fill="#3c3c3c"/><path d="M4.7,4.7l5.6,5.6m0,-5.6l-5.6,5.6" stroke="#fff" stroke-width="2"/></svg><svg class="abs" style="left:70.5px;top:134.0px;width:15px;height:15px" viewBox="0 0 15 15"><circle cx="7.5" cy="7.5" r="7" fill="#3c3c3c"/><rect x="3.8" y="6.2" width="5.2" height="4.4" fill="none" stroke="#fff" stroke-width="1.2"/><path d="M6,6V4.2h5.2v4.4H9.2" fill="none" stroke="#fff" stroke-width="1.2"/></svg>
<div id="tree"><div class="row" style="top:-0.5px"><div class="arr"></div><div class="cb on"></div><svg class="abs" style="left:53px;top:1px;width:18px;height:18px" viewBox="0 0 24 24"><circle cx="6" cy="19" r="1.5" fill="none" stroke="#666"/><circle cx="9" cy="9" r="1.5" fill="none" stroke="#666"/><circle cx="19" cy="5" r="1.5" fill="none" stroke="#666"/></svg><span class="t">places</span></div><div class="row" style="top:19.5px"><div class="arr"></div><div class="cb on"></div><svg class="abs" style="left:53px;top:1px;width:18px;height:18px" viewBox="0 0 24 24"><path d="M3,9C3,4.5 9,5 12,6.5C15,5 21,4.5 21.5,8.5C22,13 20,18 16,17C13,16 11,16 8,17.5C4,18.5 2.5,14 3,9Z" fill="#f4f4f4" stroke="#8a8a8a" stroke-width="1.2"/></svg><span class="t">buildings</span></div><div class="row" style="top:39.5px"><div class="arr"></div><div class="cb on"></div><svg class="abs" style="left:53px;top:1px;width:18px;height:18px" viewBox="0 0 24 24"><path d="M3.5,6L9,21L14.5,5.5L21,3.5" fill="none" stroke="#666" stroke-width="1.1"/><circle cx="3.5" cy="6" r="1.4" fill="#fff" stroke="#666"/><circle cx="9" cy="21" r="1.4" fill="#fff" stroke="#666"/><circle cx="14.5" cy="5.5" r="1.4" fill="#fff" stroke="#666"/><circle cx="21" cy="3.5" r="1.4" fill="#fff" stroke="#666"/></svg><span class="t">roads</span></div><div class="row" style="top:59.5px"><div class="arr"></div><div class="cb on"></div><svg class="abs" style="left:53px;top:1px;width:18px;height:18px" viewBox="0 0 24 24"><path d="M3,9C3,4.5 9,5 12,6.5C15,5 21,4.5 21.5,8.5C22,13 20,18 16,17C13,16 11,16 8,17.5C4,18.5 2.5,14 3,9Z" fill="#f4f4f4" stroke="#8a8a8a" stroke-width="1.2"/></svg><span class="t">water</span></div><div class="row" style="top:79.5px"><div class="arrd"></div><div class="cb on"></div><svg class="abs" style="left:53px;top:1px;width:18px;height:18px" viewBox="0 0 24 24"><path d="M3.5,6L9,21L14.5,5.5L21,3.5" fill="none" stroke="#666" stroke-width="1.1"/><circle cx="3.5" cy="6" r="1.4" fill="#fff" stroke="#666"/><circle cx="9" cy="21" r="1.4" fill="#fff" stroke="#666"/><circle cx="14.5" cy="5.5" r="1.4" fill="#fff" stroke="#666"/><circle cx="21" cy="3.5" r="1.4" fill="#fff" stroke="#666"/></svg><span class="t">routes</span></div><div class="row" style="top:153.5px"><div class="arr"></div><div class="cb on"></div><svg class="abs" style="left:53px;top:1px;width:18px;height:18px" viewBox="0 0 24 24"><path d="M3.5,6L9,21L14.5,5.5L21,3.5" fill="none" stroke="#666" stroke-width="1.1"/><circle cx="3.5" cy="6" r="1.4" fill="#fff" stroke="#666"/><circle cx="9" cy="21" r="1.4" fill="#fff" stroke="#666"/><circle cx="14.5" cy="5.5" r="1.4" fill="#fff" stroke="#666"/><circle cx="21" cy="3.5" r="1.4" fill="#fff" stroke="#666"/></svg><span class="t">rivers</span></div><div class="row" style="top:173.5px"><div class="arr"></div><div class="cb on"></div><svg class="abs" style="left:53px;top:1px;width:18px;height:18px" viewBox="0 0 24 24"><path d="M3,9C3,4.5 9,5 12,6.5C15,5 21,4.5 21.5,8.5C22,13 20,18 16,17C13,16 11,16 8,17.5C4,18.5 2.5,14 3,9Z" fill="#f4f4f4" stroke="#8a8a8a" stroke-width="1.2"/></svg><span class="t">school_property</span></div><div class="abs" style="left:45px;top:109px;width:16px;height:1px;background:#f0a640"></div><div class="abs" style="left:45px;top:126.5px;width:4px;height:2px;background:#ddca8f"></div><div class="abs" style="left:52px;top:126.5px;width:4px;height:2px;background:#ddca8f"></div><div class="abs" style="left:45px;top:144px;width:11px;height:3px;background:#ddc88a"></div><div class="row" style="top:194px;height:22px;width:292px;background:#3875d7;color:#fff;line-height:22px"><div class="arr" style="top:6px;border-left-color:#8a8f98"></div><div class="cb on" style="top:4px"></div><svg class="abs" style="left:53px;top:1px;width:20px;height:20px" viewBox="0 0 24 24"><g transform="translate(1,0)"><path d="M15.5,2.5L20,5L10,21.5L5.5,19Z" fill="#e98a4a" stroke="#b3501a" stroke-width="0.9"/><path d="M17.7,3.8L8,20.2" stroke="#b3501a" stroke-width="0.8"/><path d="M15.5,2.5L20,5L19,6.6L14.5,4.1Z" fill="#e8e8e8" stroke="#999" stroke-width="0.6"/><path d="M5.5,19L10,21.5L4.6,23.6Z" fill="#e9dcc5" stroke="#777" stroke-width="0.7"/><path d="M4.6,23.6l1.6,-0.7l-1.2,-1Z" fill="#333"/></g></svg><span class="t" style="left:80px;text-decoration:underline">landuse</span></div><div class="row" style="top:215.5px"><div class="cb" style="background:#fff;border-color:#a8a8a8"></div><svg class="abs" style="left:54px;top:2px;width:16px;height:16px" viewBox="0 0 24 24"><rect x="2" y="2" width="20" height="20" fill="#c4c4c4"/><path d="M2,2h6.7v6.7H2ZM15.3,2H22v6.7h-6.7ZM8.7,8.7h6.6v6.6H8.7ZM2,15.3h6.7V22H2ZM15.3,15.3H22V22h-6.7Z" fill="#8e8e8e"/><path d="M8.7,2h6.6v6.7H8.7Z" fill="#aaa"/></svg><span class="t">3420C_2010_327_RGB_LATLNG</span></div></div>
<div class="abs" style="left:49px;top:1120px;width:293px;height:11px;background:#dedede;border-top:1px solid #b9b9b9;border-bottom:1px solid #cfcfcf;border-radius:0 0 3px 3px"></div><div class="abs" style="left:130.5px;top:1120.7px;width:60px;height:20px;background:linear-gradient(#a2a2a2,#7e7e7e);border:1px solid #6a6a6a;border-radius:4px 0 0 4px;color:#fff;text-align:center;line-height:17px;font-size:13px;text-shadow:0 -1px 0 #555">Layers</div><div class="abs" style="left:190.5px;top:1120.7px;width:70px;height:20px;background:linear-gradient(#fff,#ececec);border:1px solid #9d9d9d;border-left:none;border-radius:0 4px 4px 0;text-align:center;line-height:17px;font-size:13px">Browser</div>
<div id="mapborder"></div>
<div id="status"><div class="abs" style="left:7px;top:7px;white-space:nowrap;">Validation finished (1 error(s) found).</div><div class="abs" style="left:955px;top:7px;white-space:nowrap;color:#0000e6;text-decoration:underline">There is a new plugin available</div><div class="abs" style="left:1143px;top:6px;width:20px;height:20px;border:1px solid #8f8f8f;background:linear-gradient(#fafafa,#dedede)"><svg width="18" height="18" viewBox="0 0 18 18"><path d="M4,4L13,13M5,8a3,3 0 1 1 4,-4M9,14a3,3 0 1 0 4,-4" fill="none" stroke="#222" stroke-width="2"/><circle cx="12" cy="5" r="2" fill="none" stroke="#222" stroke-width="1.4"/></svg></div><div class="abs" style="left:1172px;top:7px;white-space:nowrap;">Coordinate:</div><div class="abs" style="left:1249px;top:5px;width:300px;height:21px;border:1px solid #9a9a9a;border-top-color:#6f6f6f;background:#fff;text-align:center;line-height:20px">20.52077,-34.01789</div><div class="abs" style="left:1558px;top:7px;white-space:nowrap;">Scale</div><div class="abs" style="left:1604px;top:9px;width:94px;height:17px;border:1px solid #a3a3a3;border-radius:3px;background:#fff;line-height:16px;padding-left:2px">1:2819<div class="abs" style="right:0;top:0;width:14px;height:15px;border-left:1px solid #c4c4c4"></div><div class="dd" style="right:3.5px;top:6px;border-left-width:3px;border-right-width:3px;border-top-width:4px"></div></div><div class="abs" style="left:1704px;top:6px;width:20px;height:20px;border:1px solid #8f8f8f;background:linear-gradient(#fafafa,#dedede)"><svg width="18" height="18" viewBox="0 0 18 18"><path d="M3,16L15,3L12,12Z" fill="#888" stroke="#555" stroke-width="0.8"/><circle cx="6.5" cy="6" r="3.6" fill="none" stroke="#d02020" stroke-width="1.4"/><path d="M4,3.5l5,5" stroke="#d02020" stroke-width="1.4"/></svg></div><div class="cb on" style="left:1730px;top:8px"></div><div class="abs" style="left:1748px;top:7px;white-space:nowrap;">Render</div><div class="abs" style="left:1796px;top:7px;white-space:nowrap;color:#444">EPSG:4326</div><div class="abs" style="left:1874px;top:6px;width:20px;height:20px;border:1px solid #8f8f8f;background:linear-gradient(#fafafa,#dedede)"><svg width="18" height="18" viewBox="0 0 18 18"><circle cx="9" cy="9" r="6.5" fill="#ddd" stroke="#777" stroke-width="1.2"/><ellipse cx="9" cy="9" rx="3" ry="6.5" fill="none" stroke="#777"/><path d="M2.5,9h13M9,2.5v13" stroke="#777"/></svg></div><svg class="abs" style="left:1905px;top:17px;width:14px;height:14px" viewBox="0 0 14 14"><path d="M13,2L2,13M13,6L6,13M13,10L10,13" stroke="#9a9a9a" stroke-width="1"/></svg></div>
</div>
<svg id="map" width="2034" height="1288" viewBox="0 0 2034 1288" style="position:absolute;left:0;top:0" shape-rendering="auto">
<defs><clipPath id="mc"><rect x="401" y="166" width="1575" height="1010"/></clipPath><pattern id="wat" x="0" y="0" width="5" height="5" patternUnits="userSpaceOnUse"><rect width="5" height="5" fill="#a6ceff"/><rect x="1" y="1" width="1" height="1" fill="#4358ff"/><rect x="3" y="1" width="2" height="1" fill="#4358ff"/><rect x="1" y="3" width="1" height="2" fill="#4358ff"/><rect x="3" y="3" width="2" height="2" fill="#4358ff"/></pattern><g id="x"><path d="M-3.8,-3.8L3.8,3.8M-3.8,3.8L3.8,-3.8" stroke="#f21c1c" stroke-width="0.85" fill="none"/></g><g id="sq"><rect x="-4.3" y="-4.3" width="8.6" height="8.6" fill="none" stroke="#f00000" stroke-width="2.2"/><path d="M-3.2,-3.2L3.2,3.2M-3.2,3.2L3.2,-3.2" stroke="#f44" stroke-width="0.6" fill="none"/></g></defs>
<rect x="401" y="166" width="1575" height="1010" fill="#fff"/>
<g clip-path="url(#mc)">
<polygon points="817.3,166.0 1716.0,166.0 1708.6,194.8 1689.5,233.8 1694.0,243.0 1842.8,281.0 1793.8,332.6 1770.0,335.0 1688.0,420.8 1676.9,423.8 1637.9,477.3 1554.6,536.9 1546.4,550.3 1492.7,666.3 1507.3,754.9 1521.2,759.0 1529.6,792.9 1513.7,792.0 1491.9,768.9 1422.6,763.3 1107.6,848.0 1104.3,894.3 874.2,853.0 866.0,940.0 845.0,1176.0 548.0,1176.0 462.0,1154.7 536.5,1102.7 555.8,1066.5 557.0,1043.8 487.0,911.8 515.0,672.6 550.4,410.7 587.0,396.0 603.0,396.0 613.0,383.0 652.0,365.0 759.0,383.0 822.0,387.0 822.0,396.0 840.0,407.0 845.0,423.0 871.0,441.0 870.0,404.0 973.0,387.0 920.6,314.0 904.4,275.0 880.8,262.5 894.0,237.4 912.5,239.6 888.9,202.0 818.8,171.0" fill="#dcf7c9"/>
<polygon points="1723.5,166.0 1833.0,166.0 1844.8,173.0 1845.7,192.3 1698.0,235.8 1715.6,191.0" fill="#dcf7c9"/>
<polygon points="1553.0,552.3 1695.0,461.1 1770.0,462.4 1808.0,541.1 1815.0,597.7 1782.7,613.9 1760.8,614.6 1722.8,642.9 1775.0,676.0 1727.8,774.8 1734.7,799.1 1734.7,807.6 1691.3,825.0 1698.7,853.0 1659.7,894.0 1639.6,897.7 1597.6,917.6 1560.9,930.0 1548.9,912.6 1540.2,786.7 1565.8,720.2 1536.0,720.7 1522.9,712.7 1518.6,673.0 1524.8,618.8" fill="#dcf7c9"/>
<polygon points="1544.7,956.8 1569.5,951.1 1586.9,979.7 1584.0,994.1 1537.8,1041.8 1522.4,1042.3" fill="#dcf7c9"/>
<polygon points="1813.0,834.4 1732.7,894.0 1555.8,1176.0 1692.0,1176.0" fill="#dcf7c9"/>
<polygon points="1140.6,985.8 1204.9,996.4 1189.8,1049.5 1170.6,1070.7 1121.4,1150.4 1108.0,1176.0 1038.8,1176.0 1053.0,1157.8 1105.8,1064.8" fill="#dcf7c9"/>
<polygon points="1756.6,387.8 1816.7,374.0 1770.7,394.0" fill="#dcf7c9"/>
<polygon points="709.2,166.0 810.0,166.0 810.7,174.7 880.8,208.7 875.6,241.9 751.0,225.6 701.5,207.6" fill="#dcf7c9"/>
<polygon points="401.0,166.0 500.3,166.0 503.1,185.2 492.4,193.8 452.8,193.0 401.0,200.9" fill="#dcf7c9"/>
<polygon points="516.0,166.0 665.5,166.0 656.8,175.7 520.7,188.3" fill="#dcf7c9"/>
<polygon points="401.0,220.6 412.2,223.7 401.0,232.0" fill="#dcf7c9"/>
<polygon points="573.4,222.9 618.3,239.9 628.5,256.8 629.6,275.2 645.8,311.0 641.0,337.0 628.6,363.0 550.4,400.4" fill="#dcf7c9"/>
<polygon points="401.0,675.5 509.0,672.6 487.0,870.0 475.0,871.7 429.5,762.0 401.0,735.4" fill="#dcf7c9"/>
<polygon points="401.0,747.0 418.3,765.5 456.8,871.7 401.0,871.7" fill="#dcf7c9"/>
<polygon points="401.0,877.0 443.6,877.0 475.2,933.7 472.6,977.3 458.6,1043.3 450.1,1126.2 448.6,1131.1 421.6,1145.9 401.0,1168.5" fill="#dcf7c9"/>
<polygon points="477.6,977.3 501.6,976.0 518.8,989.2 520.6,1022.7 543.9,1043.3 528.6,1084.2 466.8,1138.3 454.0,1140.0 456.0,1133.0 464.6,1043.3" fill="#dcf7c9"/>
<polygon points="428.0,1158.7 442.2,1150.8 457.0,1157.7 457.0,1161.6 511.0,1174.4 513.0,1176.0 417.7,1176.0" fill="#dcf7c9"/>
<polygon points="1084.0,166.0 1094.4,166.0 1095.9,178.4 1087.0,196.9 1149.7,223.4 1156.3,230.8 1151.9,234.5 1068.6,196.9 1010.3,166.0 1019.2,166.0 1044.2,177.7 1076.0,185.1" fill="#fff"/>
<polygon points="1157.0,229.3 1165.2,219.0 1191.7,212.4 1179.2,236.0 1172.6,241.1 1175.5,254.4 1142.3,306.0 1135.0,328.1 1126.8,336.3 1116.5,326.7 1125.4,320.8 1128.3,294.2 1152.7,261.0 1154.9,236.7 1151.9,234.5" fill="#fff"/>
<polygon points="1165.2,219.0 1234.5,191.0 1247.8,177.7 1253.7,166.0 1346.0,166.0 1342.2,171.0 1334.0,182.9 1320.8,189.5 1298.7,193.9 1265.5,196.9 1191.7,212.4" fill="#fff"/>
<polygon points="1179.2,236.0 1340.0,252.9 1369.5,245.5 1453.5,166.0 1463.9,166.0 1447.6,182.0 1369.5,259.1 1347.3,260.3 1200.6,247.8 1197.6,256.6 1175.5,254.4 1172.6,241.1" fill="#fff"/>
<polygon points="1175.5,254.4 1197.6,256.6 1236.7,278.7 1244.8,308.2 1447.0,403.6 1528.0,427.0 1513.3,456.5 1479.4,424.0 1238.9,311.9 1226.4,282.4" fill="#fff"/>
<polygon points="894.0,237.4 912.5,239.6 988.4,268.4 1022.1,286.8 1107.7,320.0 1116.5,326.7 1126.8,336.3 1026.5,299.4 977.4,272.8 917.6,252.9" fill="#fff"/>
<polygon points="1453.5,175.3 1689.5,233.8 1694.0,243.0 1456.5,182.4" fill="#fff"/>
<polygon points="1388.6,317.0 1433.6,307.5 1433.6,315.6 1500.0,314.5 1598.6,309.8 1604.3,320.2 1659.0,336.9 1688.0,420.8 1676.9,423.8 1647.8,370.0 1580.7,326.0 1500.0,329.0 1438.0,330.4 1408.6,328.9" fill="#fff"/>
<line x1="401" y1="1085.5" x2="458.5" y2="1050" stroke="#fff" stroke-width="2.6"/>
<use href="#x" x="1237.0" y="614.0"/>
<use href="#x" x="1366.0" y="652.0"/>
<use href="#x" x="1829.6" y="366.7"/>
<use href="#x" x="1837.8" y="370.4"/>
<use href="#x" x="550.4" y="400.4"/>
<use href="#x" x="508.0" y="672.6"/>
<use href="#x" x="1044.2" y="177.7"/>
<use href="#x" x="1071.0" y="185.0"/>
<use href="#x" x="1078.0" y="196.0"/>
<use href="#x" x="1088.5" y="169.0"/>
<use href="#x" x="1095.9" y="178.4"/>
<use href="#x" x="1068.6" y="196.9"/>
<use href="#x" x="1149.7" y="223.4"/>
<use href="#x" x="1152.0" y="235.6"/>
<use href="#x" x="1179.2" y="236.0"/>
<use href="#x" x="1191.7" y="212.4"/>
<use href="#x" x="1200.6" y="247.8"/>
<use href="#x" x="1197.6" y="256.6"/>
<use href="#x" x="1175.5" y="254.4"/>
<use href="#x" x="1152.7" y="261.0"/>
<use href="#x" x="1128.3" y="294.2"/>
<use href="#x" x="1142.3" y="306.0"/>
<use href="#x" x="1135.0" y="328.1"/>
<use href="#x" x="1126.8" y="336.3"/>
<use href="#x" x="1107.7" y="320.0"/>
<use href="#x" x="1116.0" y="322.0"/>
<use href="#x" x="1123.0" y="316.0"/>
<use href="#x" x="1022.1" y="286.8"/>
<use href="#x" x="1026.5" y="299.4"/>
<use href="#x" x="1236.7" y="278.7"/>
<use href="#x" x="1226.4" y="282.4"/>
<use href="#x" x="1244.8" y="308.2"/>
<use href="#x" x="1238.9" y="311.9"/>
<use href="#x" x="1234.5" y="191.0"/>
<use href="#x" x="1247.8" y="177.7"/>
<use href="#x" x="1265.5" y="196.9"/>
<use href="#x" x="1298.7" y="193.9"/>
<use href="#x" x="1320.8" y="189.5"/>
<use href="#x" x="1334.0" y="182.9"/>
<use href="#x" x="1342.2" y="171.0"/>
<use href="#x" x="1340.0" y="252.9"/>
<use href="#x" x="1347.3" y="260.3"/>
<use href="#x" x="1369.5" y="245.5"/>
<use href="#x" x="1369.5" y="259.1"/>
<use href="#x" x="1453.5" y="176.2"/>
<use href="#x" x="1456.5" y="180.6"/>
<use href="#x" x="1388.6" y="317.0"/>
<use href="#x" x="1433.6" y="306.8"/>
<use href="#x" x="1433.6" y="315.9"/>
<use href="#x" x="1408.6" y="328.9"/>
<use href="#x" x="1438.0" y="329.9"/>
<use href="#x" x="1447.0" y="404.8"/>
<use href="#x" x="1479.4" y="422.5"/>
<use href="#x" x="1528.0" y="427.0"/>
<use href="#x" x="1513.7" y="456.9"/>
<use href="#x" x="1518.6" y="481.0"/>
<use href="#x" x="1540.0" y="529.0"/>
<use href="#x" x="1554.6" y="536.9"/>
<use href="#x" x="1540.0" y="549.0"/>
<use href="#x" x="1553.0" y="552.3"/>
<use href="#x" x="1492.7" y="666.3"/>
<use href="#x" x="1507.3" y="754.9"/>
<use href="#x" x="1521.2" y="759.0"/>
<use href="#x" x="1513.7" y="792.0"/>
<use href="#x" x="1529.6" y="792.9"/>
<use href="#x" x="1491.9" y="768.9"/>
<use href="#x" x="1540.0" y="787.0"/>
<use href="#x" x="988.4" y="268.4"/>
<use href="#x" x="977.4" y="272.8"/>
<use href="#x" x="917.6" y="252.9"/>
<use href="#x" x="912.5" y="239.6"/>
<use href="#x" x="894.0" y="237.4"/>
<use href="#x" x="880.8" y="262.5"/>
<use href="#x" x="904.4" y="275.0"/>
<use href="#x" x="920.6" y="314.0"/>
<use href="#x" x="888.9" y="202.0"/>
<use href="#x" x="818.8" y="171.0"/>
<use href="#x" x="810.7" y="174.7"/>
<use href="#x" x="880.8" y="208.7"/>
<use href="#x" x="875.6" y="241.9"/>
<use href="#x" x="751.0" y="225.6"/>
<use href="#x" x="701.5" y="207.6"/>
<use href="#x" x="1715.6" y="191.0"/>
<use href="#x" x="1708.6" y="194.8"/>
<use href="#x" x="1689.5" y="233.8"/>
<use href="#x" x="1698.0" y="235.8"/>
<use href="#x" x="1844.8" y="173.0"/>
<use href="#x" x="1845.7" y="192.3"/>
<use href="#x" x="1842.8" y="281.0"/>
<use href="#x" x="1793.8" y="332.6"/>
<use href="#x" x="1770.0" y="335.0"/>
<use href="#x" x="1688.0" y="420.8"/>
<use href="#x" x="1676.9" y="423.8"/>
<use href="#x" x="1659.0" y="336.9"/>
<use href="#x" x="1604.3" y="320.2"/>
<use href="#x" x="1598.6" y="309.8"/>
<use href="#x" x="1580.7" y="326.0"/>
<use href="#x" x="1647.8" y="370.0"/>
<use href="#x" x="1637.9" y="477.3"/>
<use href="#x" x="1756.6" y="387.8"/>
<use href="#x" x="1816.7" y="374.0"/>
<use href="#x" x="1770.7" y="394.0"/>
<use href="#x" x="1121.4" y="1150.4"/>
<use href="#x" x="1053.0" y="1157.8"/>
<use href="#x" x="1105.8" y="1064.8"/>
<use href="#x" x="1170.6" y="1070.7"/>
<use href="#x" x="1189.8" y="1049.5"/>
<use href="#x" x="1204.9" y="996.4"/>
<use href="#x" x="1140.6" y="985.8"/>
<use href="#x" x="1555.8" y="1167.3"/>
<use href="#x" x="1813.0" y="834.4"/>
<use href="#x" x="1732.7" y="894.0"/>
<use href="#x" x="503.1" y="185.2"/>
<use href="#x" x="492.4" y="193.8"/>
<use href="#x" x="452.8" y="193.0"/>
<use href="#x" x="520.7" y="188.3"/>
<use href="#x" x="656.8" y="175.7"/>
<use href="#x" x="412.2" y="223.7"/>
<use href="#x" x="573.4" y="222.9"/>
<use href="#x" x="618.3" y="239.9"/>
<use href="#x" x="628.5" y="256.8"/>
<use href="#x" x="629.6" y="275.2"/>
<use href="#x" x="645.8" y="311.0"/>
<use href="#x" x="641.0" y="337.0"/>
<use href="#x" x="628.6" y="363.0"/>
<use href="#x" x="429.5" y="762.0"/>
<use href="#x" x="418.3" y="765.5"/>
<use href="#x" x="402.6" y="870.4"/>
<use href="#x" x="407.9" y="875.6"/>
<use href="#x" x="443.6" y="877.0"/>
<use href="#x" x="456.8" y="871.7"/>
<use href="#x" x="474.7" y="871.7"/>
<use href="#x" x="487.1" y="871.2"/>
<use href="#x" x="475.2" y="933.7"/>
<use href="#x" x="472.6" y="977.3"/>
<use href="#x" x="501.6" y="976.0"/>
<use href="#x" x="518.8" y="989.2"/>
<use href="#x" x="520.6" y="1022.7"/>
<use href="#x" x="543.9" y="1043.3"/>
<use href="#x" x="528.6" y="1084.2"/>
<use href="#x" x="466.8" y="1138.3"/>
<use href="#x" x="454.0" y="1140.0"/>
<use href="#x" x="448.6" y="1131.1"/>
<use href="#x" x="421.6" y="1145.9"/>
<use href="#x" x="446.0" y="1148.0"/>
<use href="#x" x="428.0" y="1158.7"/>
<use href="#x" x="451.0" y="1159.0"/>
<use href="#x" x="513.0" y="1174.0"/>
<use href="#x" x="460.5" y="1043.3"/>
<use href="#x" x="457.8" y="1050.5"/>
<use href="#x" x="1553.0" y="552.3"/>
<use href="#x" x="1695.0" y="461.1"/>
<use href="#x" x="1770.0" y="462.4"/>
<use href="#x" x="1808.0" y="541.1"/>
<use href="#x" x="1815.0" y="597.7"/>
<use href="#x" x="1782.7" y="613.9"/>
<use href="#x" x="1760.8" y="614.6"/>
<use href="#x" x="1722.8" y="642.9"/>
<use href="#x" x="1775.0" y="676.0"/>
<use href="#x" x="1727.8" y="774.8"/>
<use href="#x" x="1734.7" y="799.1"/>
<use href="#x" x="1734.7" y="807.6"/>
<use href="#x" x="1691.3" y="825.0"/>
<use href="#x" x="1698.7" y="853.0"/>
<use href="#x" x="1659.7" y="894.0"/>
<use href="#x" x="1639.6" y="897.7"/>
<use href="#x" x="1597.6" y="917.6"/>
<use href="#x" x="1560.9" y="930.0"/>
<use href="#x" x="1548.9" y="912.6"/>
<use href="#x" x="1540.2" y="786.7"/>
<use href="#x" x="1565.8" y="720.2"/>
<use href="#x" x="1536.0" y="720.7"/>
<use href="#x" x="1522.9" y="712.7"/>
<use href="#x" x="1518.6" y="673.0"/>
<use href="#x" x="1524.8" y="618.8"/>
<use href="#x" x="1544.7" y="956.8"/>
<use href="#x" x="1569.5" y="951.1"/>
<use href="#x" x="1586.9" y="979.7"/>
<use href="#x" x="1584.0" y="994.1"/>
<use href="#x" x="1537.8" y="1041.8"/>
<use href="#x" x="1522.4" y="1042.3"/>
<polyline points="1480.0,423.0 1513.7,456.9 1532.4,500.0 1547.8,539.1" fill="none" stroke="#fff" stroke-width="4.6" stroke-linejoin="round"/>
<polyline points="1242.0,309.0 1447.0,404.5 1480.0,423.0" fill="none" stroke="#fff" stroke-width="4.6" stroke-linejoin="round"/>
<polyline points="1010.0,166.0 1068.0,194.0 1150.0,228.0 1156.0,232.0" fill="none" stroke="#fdeca0" stroke-width="2.5" stroke-linejoin="round"/>
<polyline points="1274.0,175.0 1234.0,193.0 1168.0,220.0 1159.0,227.0 1157.0,235.0 1158.0,252.0 1156.0,262.0 1133.0,296.0 1128.0,322.0 1122.0,327.0 1113.0,326.0 1030.0,294.0 1000.0,277.5 913.0,242.0" fill="none" stroke="#fdeca0" stroke-width="2.5" stroke-linejoin="round"/>
<polyline points="1156.0,232.0 1174.0,241.0 1340.0,256.5 1364.0,253.0 1372.0,249.0 1458.0,166.0" fill="none" stroke="#fdeca0" stroke-width="2.5" stroke-linejoin="round"/>
<polyline points="1174.0,241.0 1178.0,250.0 1230.0,279.0 1236.0,287.0 1242.0,309.0 1447.0,404.5 1480.0,423.0 1513.7,456.9 1532.4,500.0 1547.8,539.1 1546.4,553.1 1519.3,620.2 1512.8,662.1 1515.0,692.8 1525.4,738.6 1537.5,786.4 1541.0,811.4 1544.6,907.9 1542.9,940.0 1539.3,972.0 1518.0,1044.2 1511.5,1075.2 1506.8,1101.8 1472.3,1176.0" fill="none" stroke="#fdeca0" stroke-width="2.5" stroke-linejoin="round"/>
<polyline points="892.6,357.6 973.7,480.0 979.6,508.0 1000.0,550.3 1011.2,567.0 1015.4,589.4 1015.4,630.0 1030.2,655.1 1034.9,690.0 1041.9,718.0 1055.9,743.2 1100.6,762.7 1192.8,827.0 1211.4,846.5 1226.1,868.7 1233.5,890.8 1237.3,923.2 1233.5,946.8 1217.3,997.0 1198.0,1048.6 1162.7,1092.9 1112.5,1176.0" fill="none" stroke="#fdeca0" stroke-width="2.5" stroke-linejoin="round"/>
<polyline points="884.0,760.2 879.5,820.0 875.5,853.0 869.8,938.0 850.5,1176.0" fill="none" stroke="#fdeca0" stroke-width="2.5" stroke-linejoin="round"/>
<polyline points="874.2,853.0 1130.2,902.6 1145.0,930.6 1148.0,951.3 1142.0,982.2" fill="none" stroke="#fdeca0" stroke-width="2.5" stroke-linejoin="round"/>
<polyline points="869.2,938.0 1450.0,1034.7 1518.0,1044.2" fill="none" stroke="#fdeca0" stroke-width="2.5" stroke-linejoin="round"/>
<polyline points="1493.0,1043.7 1511.5,1075.2" fill="none" stroke="#fdeca0" stroke-width="2.5" stroke-linejoin="round"/>
<polyline points="1010.0,166.0 1068.0,194.0 1150.0,228.0 1156.0,232.0" fill="none" stroke="#b0b0b8" stroke-width="1.5" stroke-dasharray="1.3 1.4" stroke-linejoin="round"/>
<polyline points="1274.0,175.0 1234.0,193.0 1168.0,220.0 1159.0,227.0 1157.0,235.0 1158.0,252.0 1156.0,262.0 1133.0,296.0 1128.0,322.0 1122.0,327.0 1113.0,326.0 1030.0,294.0 1000.0,277.5 913.0,242.0" fill="none" stroke="#b0b0b8" stroke-width="1.5" stroke-dasharray="1.3 1.4" stroke-linejoin="round"/>
<polyline points="1156.0,232.0 1174.0,241.0 1340.0,256.5 1364.0,253.0 1372.0,249.0 1458.0,166.0" fill="none" stroke="#b0b0b8" stroke-width="1.5" stroke-dasharray="1.3 1.4" stroke-linejoin="round"/>
<polyline points="1174.0,241.0 1178.0,250.0 1230.0,279.0 1236.0,287.0 1242.0,309.0 1447.0,404.5 1480.0,423.0 1513.7,456.9 1532.4,500.0 1547.8,539.1 1546.4,553.1 1519.3,620.2 1512.8,662.1 1515.0,692.8 1525.4,738.6 1537.5,786.4 1541.0,811.4 1544.6,907.9 1542.9,940.0 1539.3,972.0 1518.0,1044.2 1511.5,1075.2 1506.8,1101.8 1472.3,1176.0" fill="none" stroke="#b0b0b8" stroke-width="1.5" stroke-dasharray="1.3 1.4" stroke-linejoin="round"/>
<polyline points="892.6,357.6 973.7,480.0 979.6,508.0 1000.0,550.3 1011.2,567.0 1015.4,589.4 1015.4,630.0 1030.2,655.1 1034.9,690.0 1041.9,718.0 1055.9,743.2 1100.6,762.7 1192.8,827.0 1211.4,846.5 1226.1,868.7 1233.5,890.8 1237.3,923.2 1233.5,946.8 1217.3,997.0 1198.0,1048.6 1162.7,1092.9 1112.5,1176.0" fill="none" stroke="#b0b0b8" stroke-width="1.5" stroke-dasharray="1.3 1.4" stroke-linejoin="round"/>
<polyline points="884.0,760.2 879.5,820.0 875.5,853.0 869.8,938.0 850.5,1176.0" fill="none" stroke="#b0b0b8" stroke-width="1.5" stroke-dasharray="1.3 1.4" stroke-linejoin="round"/>
<polyline points="874.2,853.0 1130.2,902.6 1145.0,930.6 1148.0,951.3 1142.0,982.2" fill="none" stroke="#b0b0b8" stroke-width="1.5" stroke-dasharray="1.3 1.4" stroke-linejoin="round"/>
<polyline points="869.2,938.0 1450.0,1034.7 1518.0,1044.2" fill="none" stroke="#b0b0b8" stroke-width="1.5" stroke-dasharray="1.3 1.4" stroke-linejoin="round"/>
<polyline points="1493.0,1043.7 1511.5,1075.2" fill="none" stroke="#b0b0b8" stroke-width="1.5" stroke-dasharray="1.3 1.4" stroke-linejoin="round"/>
<polygon points="587.6,202.6 597.1,191.2 616.8,189.6 631.9,190.9 660.3,205.9 700.4,212.6 738.9,233.9 784.0,234.9 829.1,258.6 872.6,271.6 874.8,279.5 810.8,363.9 790.7,367.3 769.0,370.6 697.1,366.4 670.3,354.4 648.6,358.6 658.6,342.2 662.8,322.1 653.6,280.3 640.2,244.4 595.9,216.0" fill="url(#wat)" stroke="#1c2a55" stroke-width="0.9"/>
<circle cx="1304.8" cy="154.9" r="28.1" fill="url(#wat)" stroke="#1c2a55" stroke-width="0.9"/>
<polyline points="1007,379 1084,454 1147,544 1215,592 1270,636 1410,655 1422,763" fill="none" stroke="rgba(255,255,255,0.18)" stroke-width="1"/>
<use href="#sq" x="550" y="410"/>
<use href="#sq" x="587" y="396"/>
<use href="#sq" x="603" y="396"/>
<use href="#sq" x="613" y="383"/>
<use href="#sq" x="652" y="365"/>
<use href="#sq" x="759" y="383"/>
<use href="#sq" x="822" y="387"/>
<use href="#sq" x="822" y="396"/>
<use href="#sq" x="840" y="407"/>
<use href="#sq" x="845" y="423"/>
<use href="#sq" x="871" y="441"/>
<use href="#sq" x="870" y="404"/>
<use href="#sq" x="973" y="387"/>
<use href="#sq" x="990" y="402"/>
<use href="#sq" x="1007" y="379"/>
<use href="#sq" x="1084" y="454"/>
<use href="#sq" x="1147" y="544"/>
<use href="#sq" x="1215" y="592"/>
<use href="#sq" x="1270" y="636"/>
<use href="#sq" x="1410" y="655"/>
<use href="#sq" x="1107" y="848"/>
<use href="#sq" x="1104" y="894"/>
<use href="#sq" x="874" y="853"/>
<use href="#sq" x="462" y="1155"/>
<use href="#sq" x="537" y="1102"/>
<use href="#sq" x="555" y="1066"/>
<use href="#sq" x="557" y="1044"/>
<use href="#sq" x="487" y="911"/>
<use href="#sq" x="514" y="673"/>
<rect x="1417.0" y="758.0" width="10.8" height="10.8" fill="#ff1010"/><path d="M1418.0,759.0l8.8,8.8m-8.8,0l8.8,-8.8" stroke="#00f400" stroke-width="2.2" stroke-linecap="round"/>
</g></svg>
</body></html>
